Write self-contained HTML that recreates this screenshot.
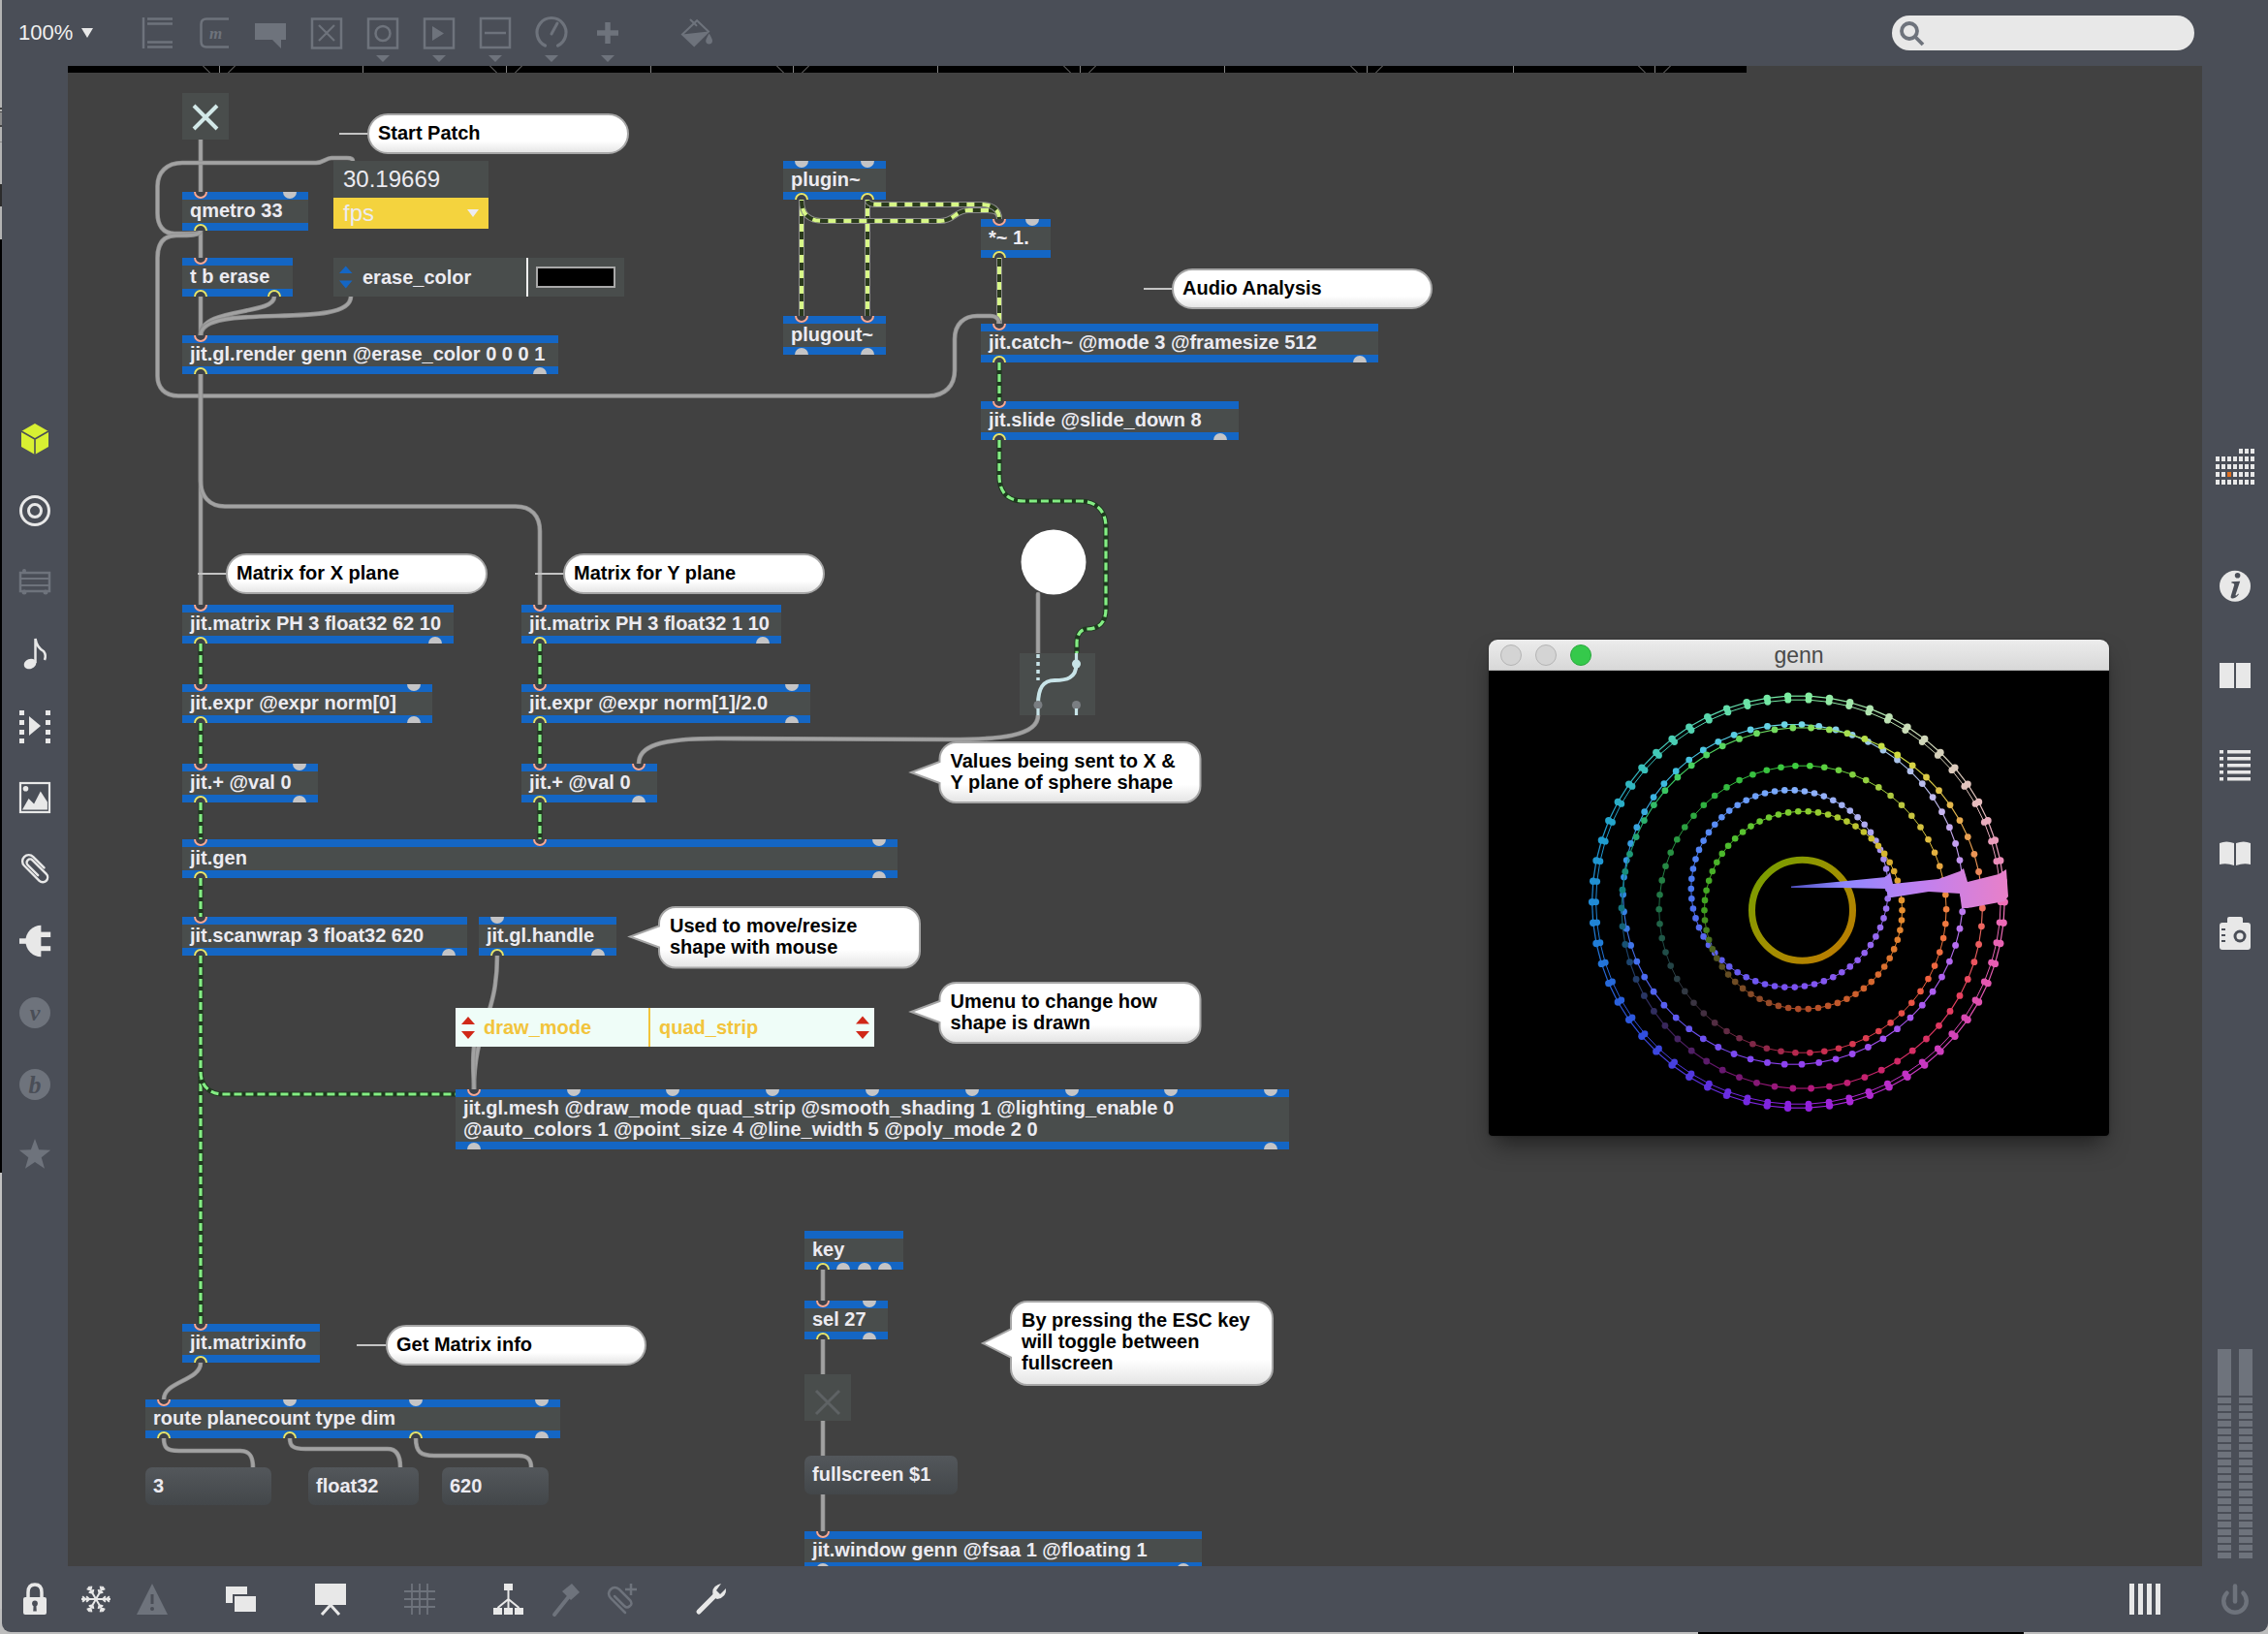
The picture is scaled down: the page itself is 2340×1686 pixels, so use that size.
<!DOCTYPE html><html><head><meta charset="utf-8"><style>
*{margin:0;padding:0;box-sizing:border-box}
html,body{width:2340px;height:1686px;overflow:hidden;background:#4a4e57;font-family:"Liberation Sans",sans-serif;position:relative}
.a{position:absolute}
.obj{position:absolute;background:#494d4c;border-top:8px solid #1466c4;border-bottom:8px solid #1466c4;color:#ecebf1;font-weight:bold;font-size:20px;line-height:22px;padding-left:8px;white-space:pre;overflow:hidden}
.msg{position:absolute;border-radius:7px;background:linear-gradient(#53575b,#43474a);color:#ecebf1;font-weight:bold;font-size:20px;line-height:22px;padding-left:8px;padding-top:8px;white-space:pre}
.cm{position:absolute;color:#000;font-weight:bold;font-size:20px;line-height:22px;white-space:pre}
svg{position:absolute;left:0;top:0;overflow:visible}
</style></head><body><div class="a" style="left:0;top:0;width:2px;height:250px;background:#b4b4b4"></div>
<div class="a" style="left:0;top:247px;width:2px;height:963px;background:#000"></div>
<div class="a" style="left:0;top:111px;width:2px;height:2px;background:#444"></div>
<div class="a" style="left:0;top:115px;width:2px;height:16px;background:#8c8c8c;border-top:1px solid #444;border-bottom:2px solid #444"></div>
<div class="a" style="left:0;top:146px;width:2px;height:1px;background:#888"></div>
<div class="a" style="left:0;top:190px;width:2px;height:23px;background:#2c2c2c"></div>
<div class="a" style="left:0;top:1210px;width:2px;height:476px;background:#c2c2c2"></div>
<div class="a" style="left:0;top:1660px;width:2340px;height:26px;background:#bdbdbd"></div>
<div class="a" style="left:1752px;top:1684px;width:336px;height:2px;background:#000"></div>
<div class="a" style="left:2px;top:1600px;width:2338px;height:84px;background:#4a4e57;border-radius:0 0 9px 9px"></div>
<div class="a" style="left:70px;top:68px;width:2202px;height:1548px;background:#414141"></div>
<div class="a" style="left:70px;top:68px;width:1732px;height:7px;background:#000"></div>
<div class="a" style="left:19px;top:19px;font-size:22px;color:#f0f0f0;line-height:30px">100%</div>
<svg width="2340" height="1686" viewBox="0 0 2340 1686"><path d="M84,29 L96,29 L90,39 Z" fill="#e8e8e8"/><g stroke="#6e737c" stroke-width="2.5" fill="none"><path d="M148,18 L148,50"/><path d="M152,19.5 L178,19.5 M152,24.5 L178,24.5 M152,43.5 L178,43.5 M152,48.5 L178,48.5"/></g><path d="M236,19.5 L213,19.5 Q207.5,19.5 207.5,25 L207.5,43 Q207.5,48.5 213,48.5 L236,48.5" stroke="#6e737c" stroke-width="2.5" fill="none"/><text x="216" y="40" font-family="Liberation Serif" font-style="italic" font-weight="bold" font-size="17" fill="#6e737c">m</text><path d="M263,24 L295,24 L295,41 L290,41 L290,50 L281,41 L263,41 Z" fill="#6e737c"/><rect x="322" y="19.5" width="30" height="30" stroke="#6e737c" stroke-width="2.5" fill="none"/><path d="M329,26 L345,42 M345,26 L329,42" stroke="#6e737c" stroke-width="2.2"/><rect x="380" y="19.5" width="30" height="30" stroke="#6e737c" stroke-width="2.5" fill="none"/><circle cx="395" cy="34.5" r="7.5" stroke="#6e737c" stroke-width="2.5" fill="none"/><path d="M388,57 L402,57 L395,64 Z" fill="#6e737c"/><rect x="438" y="19.5" width="30" height="30" stroke="#6e737c" stroke-width="2.5" fill="none"/><path d="M446,27 L458,34.5 L446,42 Z" fill="#6e737c"/><path d="M446,57 L460,57 L453,64 Z" fill="#6e737c"/><rect x="496" y="19" width="30" height="30" stroke="#6e737c" stroke-width="2.5" fill="none"/><path d="M500,34 L522,34" stroke="#6e737c" stroke-width="2.5"/><path d="M504,57 L518,57 L511,64 Z" fill="#6e737c"/><path d="M562.5,47 A15,15 0 1 1 575.5,47" stroke="#6e737c" stroke-width="3.2" fill="none" stroke-linecap="round"/><path d="M569,35 L575,24" stroke="#6e737c" stroke-width="3" stroke-linecap="round"/><path d="M562,57 L576,57 L569,64 Z" fill="#6e737c"/><path d="M616,34 L638,34 M627,23 L627,45" stroke="#6e737c" stroke-width="5.5"/><path d="M620,57 L634,57 L627,64 Z" fill="#6e737c"/><path d="M704,35.5 L719.1,21.2 L731,32.6 L716.2,47 Z" fill="none" stroke="#6e737c" stroke-width="2"/><path d="M704,35.5 L731,32.6 L716.2,47 Z" fill="#6e737c"/><path d="M712.5,20.5 L718.5,26.3" stroke="#6e737c" stroke-width="2" stroke-linecap="round"/><path d="M731.6,34.5 Q735,40 735,42 A3.4,3.4 0 1 1 728.2,42 Q728.4,40 731.6,34.5 Z" fill="#6e737c"/><path d="M209.5,68 L216.5,75 M226.5,68 L226.5,75 M242.5,68 L235.5,75" stroke="#a8a8a8" stroke-width="0.8"/><path d="M505.5,68 L512.5,75 M522.5,68 L522.5,75 M538.5,68 L531.5,75" stroke="#a8a8a8" stroke-width="0.8"/><path d="M801.5,68 L808.5,75 M818.5,68 L818.5,75 M834.5,68 L827.5,75" stroke="#a8a8a8" stroke-width="0.8"/><path d="M1097.5,68 L1104.5,75 M1114.5,68 L1114.5,75 M1130.5,68 L1123.5,75" stroke="#a8a8a8" stroke-width="0.8"/><path d="M1393.5,68 L1400.5,75 M1410.5,68 L1410.5,75 M1426.5,68 L1419.5,75" stroke="#a8a8a8" stroke-width="0.8"/><path d="M1690.5,68 L1697.5,75 M1707.5,68 L1707.5,75 M1723.5,68 L1716.5,75" stroke="#a8a8a8" stroke-width="0.8"/><path d="M374.5,68 L374.5,75" stroke="#a8a8a8" stroke-width="0.8"/><path d="M671.5,68 L671.5,75" stroke="#a8a8a8" stroke-width="0.8"/><path d="M967.5,68 L967.5,75" stroke="#a8a8a8" stroke-width="0.8"/><path d="M1263.5,68 L1263.5,75" stroke="#a8a8a8" stroke-width="0.8"/><path d="M1561.5,68 L1561.5,75" stroke="#a8a8a8" stroke-width="0.8"/><rect x="1952" y="16" width="312" height="36" rx="18" fill="#e8e8e8"/><circle cx="1970" cy="32" r="8" stroke="#6e737c" stroke-width="3.8" fill="none"/><path d="M1975.5,37.5 L1984,46" stroke="#6e737c" stroke-width="3.8"/><path d="M36,437 L50,445 L50,461 L36,469 L22,461 L22,445 Z" fill="#d8f032"/><path d="M22,445 L36,453 L50,445 M36,453 L36,469" stroke="#4a4e57" stroke-width="1.6" fill="none"/><circle cx="36" cy="527" r="14.5" stroke="#e8e8e8" stroke-width="3" fill="none"/><circle cx="36" cy="527" r="6.5" stroke="#e8e8e8" stroke-width="3" fill="none"/><rect x="21" y="591" width="30" height="19" stroke="#6e737c" stroke-width="2.5" fill="none"/><path d="M21,597 L51,597 M21,604 L51,604" stroke="#6e737c" stroke-width="2"/><circle cx="25" cy="611" r="2.5" fill="#6e737c"/><circle cx="47" cy="611" r="2.5" fill="#6e737c"/><circle cx="25" cy="589" r="2" fill="#6e737c"/><ellipse cx="31" cy="685" rx="6.5" ry="5" fill="#e8e8e8" transform="rotate(-20 31 685)"/><path d="M36.5,684 L36.5,659 Q38,668 45,672 Q48,676 46,681" stroke="#e8e8e8" stroke-width="2.5" fill="none"/><rect x="20" y="733" width="5" height="5" fill="#e8e8e8"/><rect x="47" y="733" width="5" height="5" fill="#e8e8e8"/><rect x="20" y="743" width="5" height="5" fill="#e8e8e8"/><rect x="47" y="743" width="5" height="5" fill="#e8e8e8"/><rect x="20" y="753" width="5" height="5" fill="#e8e8e8"/><rect x="47" y="753" width="5" height="5" fill="#e8e8e8"/><rect x="20" y="762" width="5" height="5" fill="#e8e8e8"/><rect x="47" y="762" width="5" height="5" fill="#e8e8e8"/><path d="M30,739 L42,749 L30,759 Z" fill="#e8e8e8"/><rect x="21" y="808" width="30" height="30" stroke="#e8e8e8" stroke-width="2.2" fill="none"/><circle cx="26.5" cy="813.8" r="2.8" fill="#e8e8e8"/><path d="M23,835.5 L29.6,824 L35.1,829.4 L41.8,816.5 L48.9,827.5 L48.9,835.5 Z" fill="#e8e8e8"/><g transform="translate(36,895) rotate(-45)"><path d="M6.5,7 L6.5,-9 A6.5,6.5 0 0 0 -6.5,-9 L-6.5,13 A5,5 0 0 0 3.5,13 L3.5,-7 A3.5,3.5 0 0 0 -3.5,-7 L-3.5,8" stroke="#e8e8e8" stroke-width="2.4" fill="none" stroke-linecap="round"/></g><path d="M42.4,954.8 A16,16.25 0 0 0 42.4,987.3 Z" fill="#e8e8e8"/><rect x="20" y="968.3" width="8" height="5.5" fill="#e8e8e8"/><rect x="42" y="961.6" width="10.2" height="5.4" fill="#e8e8e8"/><rect x="42" y="976.2" width="10.2" height="5" fill="#e8e8e8"/><circle cx="36" cy="1045" r="16" fill="#6e737c"/><text x="36" y="1053" text-anchor="middle" font-family="Liberation Serif" font-style="italic" font-weight="bold" font-size="24" fill="#4a4e57">v</text><circle cx="36" cy="1119" r="16" fill="#6e737c"/><text x="36" y="1128" text-anchor="middle" font-family="Liberation Serif" font-style="italic" font-weight="bold" font-size="26" fill="#4a4e57">b</text><path d="M36.0,1175.0 L40.1,1186.3 L52.2,1186.7 L42.7,1194.2 L46.0,1205.8 L36.0,1199.0 L26.0,1205.8 L29.3,1194.2 L19.8,1186.7 L31.9,1186.3 Z" fill="#6e737c"/><rect x="2310" y="463" width="4" height="5" fill="#e8e8e8"/><rect x="2316" y="463" width="4" height="5" fill="#e8e8e8"/><rect x="2322" y="463" width="4" height="5" fill="#e8e8e8"/><rect x="2286" y="471" width="4" height="5" fill="#e8e8e8"/><rect x="2292" y="471" width="4" height="5" fill="#e8e8e8"/><rect x="2298" y="471" width="4" height="5" fill="#e8e8e8"/><rect x="2304" y="471" width="4" height="5" fill="#e8e8e8"/><rect x="2310" y="471" width="4" height="5" fill="#e8e8e8"/><rect x="2316" y="471" width="4" height="5" fill="#e8e8e8"/><rect x="2322" y="471" width="4" height="5" fill="#e8e8e8"/><rect x="2286" y="479" width="4" height="5" fill="#e8e8e8"/><rect x="2292" y="479" width="4" height="5" fill="#e8e8e8"/><rect x="2298" y="479" width="4" height="5" fill="#e8e8e8"/><rect x="2304" y="479" width="4" height="5" fill="#e8e8e8"/><rect x="2310" y="479" width="4" height="5" fill="#e8e8e8"/><rect x="2316" y="479" width="4" height="5" fill="#e8e8e8"/><rect x="2322" y="479" width="4" height="5" fill="#e8e8e8"/><rect x="2286" y="487" width="4" height="5" fill="#e8e8e8"/><rect x="2292" y="487" width="4" height="5" fill="#e8e8e8"/><rect x="2298" y="487" width="4" height="5" fill="#e07020"/><rect x="2304" y="487" width="4" height="5" fill="#e8e8e8"/><rect x="2310" y="487" width="4" height="5" fill="#e8e8e8"/><rect x="2316" y="487" width="4" height="5" fill="#e8e8e8"/><rect x="2322" y="487" width="4" height="5" fill="#e8e8e8"/><rect x="2286" y="495" width="4" height="5" fill="#e8e8e8"/><rect x="2292" y="495" width="4" height="5" fill="#e8e8e8"/><rect x="2298" y="495" width="4" height="5" fill="#e8e8e8"/><rect x="2304" y="495" width="4" height="5" fill="#e8e8e8"/><rect x="2310" y="495" width="4" height="5" fill="#e8e8e8"/><rect x="2316" y="495" width="4" height="5" fill="#e8e8e8"/><rect x="2322" y="495" width="4" height="5" fill="#e8e8e8"/><circle cx="2306" cy="604.8" r="16" fill="#e8e8e8"/><circle cx="2308.6" cy="593.8" r="2.8" fill="#4a4e57"/><path d="M2302.5,600.2 L2311.2,599.8 L2306.6,613.5 Q2306.4,614.8 2307.6,614.2 L2309.5,612.6 L2309.9,613.3 Q2306.5,617.6 2303.2,617.6 Q2301,617.4 2301.8,614.8 L2305.2,603.6 Q2305.4,602 2302.3,601.6 Z" fill="#4a4e57"/><rect x="2290" y="684" width="15" height="26" fill="#e8e8e8"/><rect x="2307" y="684" width="15" height="26" fill="#e8e8e8"/><rect x="2290" y="774" width="4" height="3.5" fill="#e8e8e8"/><rect x="2298" y="774" width="24" height="3.5" fill="#e8e8e8"/><rect x="2290" y="781" width="4" height="3.5" fill="#e8e8e8"/><rect x="2298" y="781" width="24" height="3.5" fill="#e8e8e8"/><rect x="2290" y="788" width="4" height="3.5" fill="#e8e8e8"/><rect x="2298" y="788" width="24" height="3.5" fill="#e8e8e8"/><rect x="2290" y="795" width="4" height="3.5" fill="#e8e8e8"/><rect x="2298" y="795" width="24" height="3.5" fill="#e8e8e8"/><rect x="2290" y="802" width="4" height="3.5" fill="#e8e8e8"/><rect x="2298" y="802" width="24" height="3.5" fill="#e8e8e8"/><path d="M2290,870 Q2297,867 2305,870 L2305,893 Q2297,890 2290,892 Z M2307,870 Q2315,867 2322,870 L2322,892 Q2315,890 2307,893 Z" fill="#e8e8e8"/><rect x="2290" y="952" width="32" height="28" rx="3" fill="#e8e8e8"/><rect x="2298" y="946" width="16" height="8" rx="2" fill="#e8e8e8"/><circle cx="2311" cy="966" r="6.5" fill="#4a4e57"/><circle cx="2311" cy="966" r="3.5" fill="#e8e8e8"/><rect x="2292" y="958" width="4" height="2" fill="#4a4e57"/><rect x="2292" y="964" width="4" height="2" fill="#4a4e57"/><rect x="2292" y="970" width="4" height="2" fill="#4a4e57"/><rect x="2288" y="1392" width="14" height="48" fill="#6e737c"/><rect x="2288" y="1442" width="14" height="6" fill="#6e737c"/><rect x="2288" y="1450" width="14" height="6" fill="#6e737c"/><rect x="2288" y="1458" width="14" height="6" fill="#6e737c"/><rect x="2288" y="1466" width="14" height="6" fill="#6e737c"/><rect x="2288" y="1474" width="14" height="6" fill="#6e737c"/><rect x="2288" y="1482" width="14" height="6" fill="#6e737c"/><rect x="2288" y="1490" width="14" height="6" fill="#6e737c"/><rect x="2288" y="1498" width="14" height="6" fill="#6e737c"/><rect x="2288" y="1506" width="14" height="6" fill="#6e737c"/><rect x="2288" y="1514" width="14" height="6" fill="#6e737c"/><rect x="2288" y="1522" width="14" height="6" fill="#6e737c"/><rect x="2288" y="1530" width="14" height="6" fill="#6e737c"/><rect x="2288" y="1538" width="14" height="6" fill="#6e737c"/><rect x="2288" y="1546" width="14" height="6" fill="#6e737c"/><rect x="2288" y="1554" width="14" height="6" fill="#6e737c"/><rect x="2288" y="1562" width="14" height="6" fill="#6e737c"/><rect x="2288" y="1570" width="14" height="6" fill="#6e737c"/><rect x="2288" y="1578" width="14" height="6" fill="#6e737c"/><rect x="2288" y="1586" width="14" height="6" fill="#6e737c"/><rect x="2288" y="1594" width="14" height="6" fill="#6e737c"/><rect x="2288" y="1602" width="14" height="6" fill="#6e737c"/><rect x="2310" y="1392" width="14" height="48" fill="#6e737c"/><rect x="2310" y="1442" width="14" height="6" fill="#6e737c"/><rect x="2310" y="1450" width="14" height="6" fill="#6e737c"/><rect x="2310" y="1458" width="14" height="6" fill="#6e737c"/><rect x="2310" y="1466" width="14" height="6" fill="#6e737c"/><rect x="2310" y="1474" width="14" height="6" fill="#6e737c"/><rect x="2310" y="1482" width="14" height="6" fill="#6e737c"/><rect x="2310" y="1490" width="14" height="6" fill="#6e737c"/><rect x="2310" y="1498" width="14" height="6" fill="#6e737c"/><rect x="2310" y="1506" width="14" height="6" fill="#6e737c"/><rect x="2310" y="1514" width="14" height="6" fill="#6e737c"/><rect x="2310" y="1522" width="14" height="6" fill="#6e737c"/><rect x="2310" y="1530" width="14" height="6" fill="#6e737c"/><rect x="2310" y="1538" width="14" height="6" fill="#6e737c"/><rect x="2310" y="1546" width="14" height="6" fill="#6e737c"/><rect x="2310" y="1554" width="14" height="6" fill="#6e737c"/><rect x="2310" y="1562" width="14" height="6" fill="#6e737c"/><rect x="2310" y="1570" width="14" height="6" fill="#6e737c"/><rect x="2310" y="1578" width="14" height="6" fill="#6e737c"/><rect x="2310" y="1586" width="14" height="6" fill="#6e737c"/><rect x="2310" y="1594" width="14" height="6" fill="#6e737c"/><rect x="2310" y="1602" width="14" height="6" fill="#6e737c"/><path d="M29,1649 L29,1643 Q29,1635 36,1635 Q43,1635 43,1643 L43,1649" stroke="#e8e8e8" stroke-width="3.5" fill="none"/><rect x="24" y="1648" width="24" height="18" rx="2" fill="#e8e8e8"/><circle cx="36" cy="1654.5" r="2.9" fill="#4a4e57"/><path d="M34.6,1656 L37.4,1656 L37.8,1662.5 L34.2,1662.5 Z" fill="#4a4e57"/><path d="M99,1650 L114.0,1650.0 M106.0,1650.0 L108.9,1647.3 M106.0,1650.0 L108.9,1652.7 M110.0,1650.0 L112.9,1647.3 M110.0,1650.0 L112.9,1652.7 M99,1650 L106.5,1663.0 M102.5,1656.1 L106.3,1657.2 M102.5,1656.1 L101.6,1660.0 M104.5,1659.5 L108.3,1660.7 M104.5,1659.5 L103.6,1663.4 M99,1650 L91.5,1663.0 M95.5,1656.1 L96.4,1660.0 M95.5,1656.1 L91.7,1657.2 M93.5,1659.5 L94.4,1663.4 M93.5,1659.5 L89.7,1660.7 M99,1650 L84.0,1650.0 M92.0,1650.0 L89.1,1652.7 M92.0,1650.0 L89.1,1647.3 M88.0,1650.0 L85.1,1652.7 M88.0,1650.0 L85.1,1647.3 M99,1650 L91.5,1637.0 M95.5,1643.9 L91.7,1642.8 M95.5,1643.9 L96.4,1640.0 M93.5,1640.5 L89.7,1639.3 M93.5,1640.5 L94.4,1636.6 M99,1650 L106.5,1637.0 M102.5,1643.9 L101.6,1640.0 M102.5,1643.9 L106.3,1642.8 M104.5,1640.5 L103.6,1636.6 M104.5,1640.5 L108.3,1639.3" stroke="#e8e8e8" stroke-width="2" fill="none"/><path d="M157,1634 L173,1666 L141,1666 Z" fill="#6e737c"/><path d="M157,1645 L157,1655" stroke="#4a4e57" stroke-width="3"/><circle cx="157" cy="1660" r="2" fill="#4a4e57"/><rect x="233" y="1637" width="22" height="17" fill="#e8e8e8"/><rect x="241" y="1646" width="24" height="18" fill="#e8e8e8" stroke="#4a4e57" stroke-width="2"/><rect x="325" y="1634" width="32" height="22" fill="#e8e8e8"/><path d="M332,1666 L341,1656 L350,1666" stroke="#e8e8e8" stroke-width="3" fill="none"/><path d="M417,1642 L449,1642 M417,1650 L449,1650 M417,1658 L449,1658 M425,1634 L425,1666 M433,1634 L433,1666 M441,1634 L441,1666" stroke="#6e737c" stroke-width="1.8"/><rect x="520" y="1634" width="9" height="7" fill="#e8e8e8"/><rect x="509" y="1659" width="9" height="7" fill="#e8e8e8"/><rect x="520" y="1659" width="9" height="7" fill="#e8e8e8"/><rect x="531" y="1659" width="9" height="7" fill="#e8e8e8"/><path d="M524.5,1641 L524.5,1659 M524.5,1650 L513.5,1659 M524.5,1650 L535.5,1659" stroke="#e8e8e8" stroke-width="2" fill="none"/><path d="M572,1666 L588,1646" stroke="#6e737c" stroke-width="4" stroke-linecap="round"/><path d="M580,1642 L590,1634 L598,1643 L589,1651 Z" fill="#6e737c"/><path d="M645,1664 L630,1649 Q626,1644 630,1640 Q634,1636 639,1640 L650,1651 Q653,1655 650,1657 Q647,1660 644,1657 L634,1647" stroke="#6e737c" stroke-width="2.5" fill="none" stroke-linecap="round"/><path d="M651,1634 L651,1646 M645,1640 L657,1640" stroke="#6e737c" stroke-width="2.5"/><path d="M721,1663 L738,1646" stroke="#e8e8e8" stroke-width="5" stroke-linecap="round"/><path d="M736,1648 Q733,1638 741,1635 L744,1634 L739,1641 L743,1645 L749,1639 Q750,1648 740,1650 Z" fill="#e8e8e8"/><rect x="2197" y="1634" width="5" height="32" fill="#e8e8e8"/><rect x="2206" y="1634" width="5" height="32" fill="#e8e8e8"/><rect x="2215" y="1634" width="5" height="32" fill="#e8e8e8"/><rect x="2224" y="1634" width="5" height="32" fill="#e8e8e8"/><path d="M2297.6,1643.7 A11.8,11.8 0 1 0 2314.4,1643.7" stroke="#6e737c" stroke-width="4.4" fill="none" stroke-linecap="round"/><path d="M2306,1636.5 L2306,1652.5" stroke="#6e737c" stroke-width="4.5" stroke-linecap="round"/></svg>
<div class="a" style="left:0;top:0;width:2272px;height:1616px;overflow:hidden">
<svg width="2340" height="1686"><path d="M827,206 L827,326" stroke="#8a8a8a" stroke-width="6" fill="none" stroke-linecap="round"/><path d="M827,206 L827,326" stroke="#2a3a1c" stroke-width="4" fill="none"/><path d="M827,206 L827,326" stroke="#d8f888" stroke-width="4" stroke-dasharray="8 8" stroke-dashoffset="7" fill="none"/><path d="M895,206 L895,326" stroke="#8a8a8a" stroke-width="6" fill="none" stroke-linecap="round"/><path d="M895,206 L895,326" stroke="#2a3a1c" stroke-width="4" fill="none"/><path d="M895,206 L895,326" stroke="#d8f888" stroke-width="4" stroke-dasharray="8 8" stroke-dashoffset="7" fill="none"/><path d="M827,206 C827,222 835,228 850,228 L970,228 C985,228 985,217 1000,217 L1018,217 C1028,217 1031,220 1031,226" stroke="#8a8a8a" stroke-width="6" fill="none" stroke-linecap="round"/><path d="M827,206 C827,222 835,228 850,228 L970,228 C985,228 985,217 1000,217 L1018,217 C1028,217 1031,220 1031,226" stroke="#2a3a1c" stroke-width="4" fill="none"/><path d="M827,206 C827,222 835,228 850,228 L970,228 C985,228 985,217 1000,217 L1018,217 C1028,217 1031,220 1031,226" stroke="#d8f888" stroke-width="4" stroke-dasharray="8 8" stroke-dashoffset="7" fill="none"/><path d="M895,206 C895,210 898,211 905,211 L1012,211 C1024,211 1031,216 1031,226" stroke="#8a8a8a" stroke-width="6" fill="none" stroke-linecap="round"/><path d="M895,206 C895,210 898,211 905,211 L1012,211 C1024,211 1031,216 1031,226" stroke="#2a3a1c" stroke-width="4" fill="none"/><path d="M895,206 C895,210 898,211 905,211 L1012,211 C1024,211 1031,216 1031,226" stroke="#d8f888" stroke-width="4" stroke-dasharray="8 8" stroke-dashoffset="7" fill="none"/><path d="M1031,266 L1031,334" stroke="#8a8a8a" stroke-width="6" fill="none" stroke-linecap="round"/><path d="M1031,266 L1031,334" stroke="#2a3a1c" stroke-width="4" fill="none"/><path d="M1031,266 L1031,334" stroke="#d8f888" stroke-width="4" stroke-dasharray="8 8" stroke-dashoffset="7" fill="none"/><path d="M207,664 L207,706" stroke="#1f381f" stroke-width="5.2" fill="none" stroke-linecap="round"/><path d="M207,664 L207,706" stroke="#84ee84" stroke-width="3.2" stroke-dasharray="8 4" fill="none"/><path d="M207,746 L207,788" stroke="#1f381f" stroke-width="5.2" fill="none" stroke-linecap="round"/><path d="M207,746 L207,788" stroke="#84ee84" stroke-width="3.2" stroke-dasharray="8 4" fill="none"/><path d="M207,828 L207,866" stroke="#1f381f" stroke-width="5.2" fill="none" stroke-linecap="round"/><path d="M207,828 L207,866" stroke="#84ee84" stroke-width="3.2" stroke-dasharray="8 4" fill="none"/><path d="M557,664 L557,706" stroke="#1f381f" stroke-width="5.2" fill="none" stroke-linecap="round"/><path d="M557,664 L557,706" stroke="#84ee84" stroke-width="3.2" stroke-dasharray="8 4" fill="none"/><path d="M557,746 L557,788" stroke="#1f381f" stroke-width="5.2" fill="none" stroke-linecap="round"/><path d="M557,746 L557,788" stroke="#84ee84" stroke-width="3.2" stroke-dasharray="8 4" fill="none"/><path d="M557,828 L557,866" stroke="#1f381f" stroke-width="5.2" fill="none" stroke-linecap="round"/><path d="M557,828 L557,866" stroke="#84ee84" stroke-width="3.2" stroke-dasharray="8 4" fill="none"/><path d="M207,906 L207,946" stroke="#1f381f" stroke-width="5.2" fill="none" stroke-linecap="round"/><path d="M207,906 L207,946" stroke="#84ee84" stroke-width="3.2" stroke-dasharray="8 4" fill="none"/><path d="M207,986 L207,1366" stroke="#1f381f" stroke-width="5.2" fill="none" stroke-linecap="round"/><path d="M207,986 L207,1366" stroke="#84ee84" stroke-width="3.2" stroke-dasharray="8 4" fill="none"/><path d="M207,1106 C207,1120 216,1129 230,1129 L470,1129" stroke="#1f381f" stroke-width="5.2" fill="none" stroke-linecap="round"/><path d="M207,1106 C207,1120 216,1129 230,1129 L470,1129" stroke="#84ee84" stroke-width="3.2" stroke-dasharray="8 4" fill="none"/><path d="M1031,374 L1031,414" stroke="#1f381f" stroke-width="5.2" fill="none" stroke-linecap="round"/><path d="M1031,374 L1031,414" stroke="#84ee84" stroke-width="3.2" stroke-dasharray="8 4" fill="none"/><path d="M1031,454 L1031,491 C1031,508 1040,517 1056,517 L1114,517 C1132,517 1141,528 1141,544 L1141,628 C1141,642 1134,649 1122,649 C1114,649 1111,656 1111,664 L1111,674" stroke="#1f381f" stroke-width="5.2" fill="none" stroke-linecap="round"/><path d="M1031,454 L1031,491 C1031,508 1040,517 1056,517 L1114,517 C1132,517 1141,528 1141,544 L1141,628 C1141,642 1134,649 1122,649 C1114,649 1111,656 1111,664 L1111,674" stroke="#84ee84" stroke-width="3.2" stroke-dasharray="8 4" fill="none"/><path d="M207,144 L207,198" stroke="#8e8e8e" stroke-width="4.6" fill="none" stroke-linecap="round"/><path d="M207,144 L207,198" stroke="#a2a2a2" stroke-width="3" fill="none" stroke-linecap="round"/><path d="M207,238 L207,266" stroke="#8e8e8e" stroke-width="4.6" fill="none" stroke-linecap="round"/><path d="M207,238 L207,266" stroke="#a2a2a2" stroke-width="3" fill="none" stroke-linecap="round"/><path d="M207,238 C207,241 198,241 180,241 C168,241 162.5,232 162.5,220 L162.5,192 C162.5,178 172,168 188,168 L326,168 C334,168 336,163 342,163 L358,163 C362,163 364,164 364,166" stroke="#8e8e8e" stroke-width="4.6" fill="none" stroke-linecap="round"/><path d="M207,238 C207,241 198,241 180,241 C168,241 162.5,232 162.5,220 L162.5,192 C162.5,178 172,168 188,168 L326,168 C334,168 336,163 342,163 L358,163 C362,163 364,164 364,166" stroke="#a2a2a2" stroke-width="3" fill="none" stroke-linecap="round"/><path d="M207,238 C207,243 195,243 182,243 C168,243 162.5,252 162.5,266 L162.5,388 C162.5,400 170,408.5 184,408.5 L958,408.5 C975,408.5 985,398 985,382 L985,350 C985,334 995,326 1008,326 L1022,326 C1028,326 1031,330 1031,334" stroke="#8e8e8e" stroke-width="4.6" fill="none" stroke-linecap="round"/><path d="M207,238 C207,243 195,243 182,243 C168,243 162.5,252 162.5,266 L162.5,388 C162.5,400 170,408.5 184,408.5 L958,408.5 C975,408.5 985,398 985,382 L985,350 C985,334 995,326 1008,326 L1022,326 C1028,326 1031,330 1031,334" stroke="#a2a2a2" stroke-width="3" fill="none" stroke-linecap="round"/><path d="M207,306 L207,346" stroke="#8e8e8e" stroke-width="4.6" fill="none" stroke-linecap="round"/><path d="M207,306 L207,346" stroke="#a2a2a2" stroke-width="3" fill="none" stroke-linecap="round"/><path d="M283,306 C283,326 207,316 207,346" stroke="#8e8e8e" stroke-width="4.6" fill="none" stroke-linecap="round"/><path d="M283,306 C283,326 207,316 207,346" stroke="#a2a2a2" stroke-width="3" fill="none" stroke-linecap="round"/><path d="M362,306 C362,342 207,310 207,346" stroke="#8e8e8e" stroke-width="4.6" fill="none" stroke-linecap="round"/><path d="M362,306 C362,342 207,310 207,346" stroke="#a2a2a2" stroke-width="3" fill="none" stroke-linecap="round"/><path d="M207,386 L207,624" stroke="#8e8e8e" stroke-width="4.6" fill="none" stroke-linecap="round"/><path d="M207,386 L207,624" stroke="#a2a2a2" stroke-width="3" fill="none" stroke-linecap="round"/><path d="M207,386 L207,496 C207,512 216,522.5 232,522.5 L532,522.5 C548,522.5 557,532 557,548 L557,624" stroke="#8e8e8e" stroke-width="4.6" fill="none" stroke-linecap="round"/><path d="M207,386 L207,496 C207,512 216,522.5 232,522.5 L532,522.5 C548,522.5 557,532 557,548 L557,624" stroke="#a2a2a2" stroke-width="3" fill="none" stroke-linecap="round"/><path d="M513,986 C513,1050 489,1060 489,1124" stroke="#8e8e8e" stroke-width="4.6" fill="none" stroke-linecap="round"/><path d="M513,986 C513,1050 489,1060 489,1124" stroke="#a2a2a2" stroke-width="3" fill="none" stroke-linecap="round"/><path d="M489,1080 C487,1100 489,1110 489,1124" stroke="#8e8e8e" stroke-width="4.6" fill="none" stroke-linecap="round"/><path d="M489,1080 C487,1100 489,1110 489,1124" stroke="#a2a2a2" stroke-width="3" fill="none" stroke-linecap="round"/><path d="M1071,613 L1071,674" stroke="#8e8e8e" stroke-width="4.6" fill="none" stroke-linecap="round"/><path d="M1071,613 L1071,674" stroke="#a2a2a2" stroke-width="3" fill="none" stroke-linecap="round"/><path d="M1071,738 C1071,760 1030,763 980,763 L740,762 C680,762 659,770 659,788" stroke="#8e8e8e" stroke-width="4.6" fill="none" stroke-linecap="round"/><path d="M1071,738 C1071,760 1030,763 980,763 L740,762 C680,762 659,770 659,788" stroke="#a2a2a2" stroke-width="3" fill="none" stroke-linecap="round"/><path d="M207,1406 C207,1425 169,1425 169,1444" stroke="#8e8e8e" stroke-width="4.6" fill="none" stroke-linecap="round"/><path d="M207,1406 C207,1425 169,1425 169,1444" stroke="#a2a2a2" stroke-width="3" fill="none" stroke-linecap="round"/><path d="M169,1484 C169,1494 172,1497 185,1497 L248,1497 C258,1497 261,1503 261,1514" stroke="#8e8e8e" stroke-width="4.6" fill="none" stroke-linecap="round"/><path d="M169,1484 C169,1494 172,1497 185,1497 L248,1497 C258,1497 261,1503 261,1514" stroke="#a2a2a2" stroke-width="3" fill="none" stroke-linecap="round"/><path d="M299,1484 C299,1492 302,1495 315,1495 L400,1495 C410,1495 413,1503 413,1514" stroke="#8e8e8e" stroke-width="4.6" fill="none" stroke-linecap="round"/><path d="M299,1484 C299,1492 302,1495 315,1495 L400,1495 C410,1495 413,1503 413,1514" stroke="#a2a2a2" stroke-width="3" fill="none" stroke-linecap="round"/><path d="M429,1484 C429,1498 434,1502 448,1502 L535,1502 C545,1502 548,1506 548,1514" stroke="#8e8e8e" stroke-width="4.6" fill="none" stroke-linecap="round"/><path d="M429,1484 C429,1498 434,1502 448,1502 L535,1502 C545,1502 548,1506 548,1514" stroke="#a2a2a2" stroke-width="3" fill="none" stroke-linecap="round"/><path d="M849,1310 L849,1342" stroke="#8e8e8e" stroke-width="4.6" fill="none" stroke-linecap="round"/><path d="M849,1310 L849,1342" stroke="#a2a2a2" stroke-width="3" fill="none" stroke-linecap="round"/><path d="M849,1382 L849,1418" stroke="#8e8e8e" stroke-width="4.6" fill="none" stroke-linecap="round"/><path d="M849,1382 L849,1418" stroke="#a2a2a2" stroke-width="3" fill="none" stroke-linecap="round"/><path d="M849,1466 L849,1502" stroke="#8e8e8e" stroke-width="4.6" fill="none" stroke-linecap="round"/><path d="M849,1466 L849,1502" stroke="#a2a2a2" stroke-width="3" fill="none" stroke-linecap="round"/><path d="M849,1542 L849,1580" stroke="#8e8e8e" stroke-width="4.6" fill="none" stroke-linecap="round"/><path d="M849,1542 L849,1580" stroke="#a2a2a2" stroke-width="3" fill="none" stroke-linecap="round"/></svg>
<div class="a" style="left:188px;top:96px;width:48px;height:48px;background:#494d4c"></div>
<div class="obj" style="left:188px;top:198px;width:130px;height:40px">qmetro 33</div>
<div class="obj" style="left:188px;top:266px;width:114px;height:40px">t b erase</div>
<div class="obj" style="left:188px;top:346px;width:388px;height:40px">jit.gl.render genn @erase_color 0 0 0 1</div>
<div class="a" style="left:344px;top:166px;width:160px;height:38px;background:#494d4c;color:#ecebf1;font-size:24px;line-height:30px;padding-left:10px;padding-top:4px">30.19669</div>
<div class="a" style="left:344px;top:204px;width:160px;height:32px;background:#f4d33e;color:#ecebf1;font-size:24px;line-height:28px;padding-left:10px;padding-top:2px">fps</div>
<div class="a" style="left:344px;top:266px;width:300px;height:40px;background:#494d4c;color:#ecebf1;font-weight:bold;font-size:20px;line-height:22px;padding-left:30px;padding-top:9px">erase_color</div>
<div class="a" style="left:542.5px;top:266px;width:2px;height:40px;background:#f0f0f0"></div>
<div class="a" style="left:553px;top:275px;width:82px;height:22px;background:#000;border:2px solid #a8a8a8"></div>
<div class="obj" style="left:808px;top:166px;width:106px;height:40px">plugin~</div>
<div class="obj" style="left:808px;top:326px;width:106px;height:40px">plugout~</div>
<div class="obj" style="left:1012px;top:226px;width:72px;height:40px">*~ 1.</div>
<div class="obj" style="left:1012px;top:334px;width:410px;height:40px">jit.catch~ @mode 3 @framesize 512</div>
<div class="obj" style="left:1012px;top:414px;width:266px;height:40px">jit.slide @slide_down 8</div>
<div class="obj" style="left:188px;top:624px;width:280px;height:40px">jit.matrix PH 3 float32 62 10</div>
<div class="obj" style="left:188px;top:706px;width:258px;height:40px">jit.expr @expr norm[0]</div>
<div class="obj" style="left:188px;top:788px;width:140px;height:40px">jit.+ @val 0</div>
<div class="obj" style="left:538px;top:624px;width:268px;height:40px">jit.matrix PH 3 float32 1 10</div>
<div class="obj" style="left:538px;top:706px;width:298px;height:40px">jit.expr @expr norm[1]/2.0</div>
<div class="obj" style="left:538px;top:788px;width:140px;height:40px">jit.+ @val 0</div>
<div class="obj" style="left:188px;top:866px;width:738px;height:40px">jit.gen</div>
<div class="obj" style="left:188px;top:946px;width:294px;height:40px">jit.scanwrap 3 float32 620</div>
<div class="obj" style="left:494px;top:946px;width:142px;height:40px">jit.gl.handle</div>
<div class="a" style="left:470px;top:1040px;width:432px;height:40px;background:#effdf8"></div>
<div class="a" style="left:668.5px;top:1040px;width:2px;height:40px;background:#f2c43c"></div>
<div class="a" style="left:499px;top:1049px;color:#f2c43c;font-weight:bold;font-size:20px;line-height:22px">draw_mode</div>
<div class="a" style="left:680px;top:1049px;color:#f2c43c;font-weight:bold;font-size:20px;line-height:22px">quad_strip</div>
<div class="obj" style="left:470px;top:1124px;width:860px;height:62px">jit.gl.mesh @draw_mode quad_strip @smooth_shading 1 @lighting_enable 0
@auto_colors 1 @point_size 4 @line_width 5 @poly_mode 2 0</div>
<div class="obj" style="left:188px;top:1366px;width:142px;height:40px">jit.matrixinfo</div>
<div class="obj" style="left:150px;top:1444px;width:428px;height:40px">route planecount type dim</div>
<div class="msg" style="left:150px;top:1514px;width:130px;height:39px">3</div>
<div class="msg" style="left:318px;top:1514px;width:114px;height:39px">float32</div>
<div class="msg" style="left:456px;top:1514px;width:110px;height:39px">620</div>
<div class="obj" style="left:830px;top:1270px;width:102px;height:40px">key</div>
<div class="obj" style="left:830px;top:1342px;width:86px;height:40px">sel 27</div>
<div class="a" style="left:830px;top:1418px;width:48px;height:48px;background:#494d4c"></div>
<div class="msg" style="left:830px;top:1502px;width:158px;height:40px">fullscreen $1</div>
<div class="obj" style="left:830px;top:1580px;width:410px;height:40px">jit.window genn @fsaa 1 @floating 1</div>
<div class="a" style="left:1052px;top:674px;width:78px;height:64px;background:#494d4c"></div>
<svg width="2340" height="1686"><path d="M200,198 A7,7 0 0 0 214,198 Z" fill="#3d4148"/><path d="M201,198 A6,6 0 0 0 213,198" stroke="#f6a896" stroke-width="2" fill="none"/><path d="M292,198 A7,7 0 0 0 306,198 Z" fill="#c4c4c6"/><path d="M200,238 A7,7 0 0 1 214,238 Z" fill="#3d4148"/><path d="M201,238 A6,6 0 0 1 213,238" stroke="#e4e46e" stroke-width="2" fill="none"/><path d="M200,266 A7,7 0 0 0 214,266 Z" fill="#3d4148"/><path d="M201,266 A6,6 0 0 0 213,266" stroke="#f6a896" stroke-width="2" fill="none"/><path d="M200,306 A7,7 0 0 1 214,306 Z" fill="#3d4148"/><path d="M201,306 A6,6 0 0 1 213,306" stroke="#e4e46e" stroke-width="2" fill="none"/><path d="M276,306 A7,7 0 0 1 290,306 Z" fill="#3d4148"/><path d="M277,306 A6,6 0 0 1 289,306" stroke="#e4e46e" stroke-width="2" fill="none"/><path d="M200,346 A7,7 0 0 0 214,346 Z" fill="#3d4148"/><path d="M201,346 A6,6 0 0 0 213,346" stroke="#f6a896" stroke-width="2" fill="none"/><path d="M200,386 A7,7 0 0 1 214,386 Z" fill="#3d4148"/><path d="M201,386 A6,6 0 0 1 213,386" stroke="#e4e46e" stroke-width="2" fill="none"/><path d="M550,386 A7,7 0 0 1 564,386 Z" fill="#c4c4c6"/><path d="M820,166 A7,7 0 0 0 834,166 Z" fill="#c4c4c6"/><path d="M888,166 A7,7 0 0 0 902,166 Z" fill="#c4c4c6"/><path d="M820,206 A7,7 0 0 1 834,206 Z" fill="#3d4148"/><path d="M821,206 A6,6 0 0 1 833,206" stroke="#e4e46e" stroke-width="2" fill="none"/><path d="M888,206 A7,7 0 0 1 902,206 Z" fill="#3d4148"/><path d="M889,206 A6,6 0 0 1 901,206" stroke="#e4e46e" stroke-width="2" fill="none"/><path d="M820,326 A7,7 0 0 0 834,326 Z" fill="#3d4148"/><path d="M821,326 A6,6 0 0 0 833,326" stroke="#f6a896" stroke-width="2" fill="none"/><path d="M888,326 A7,7 0 0 0 902,326 Z" fill="#3d4148"/><path d="M889,326 A6,6 0 0 0 901,326" stroke="#f6a896" stroke-width="2" fill="none"/><path d="M820,366 A7,7 0 0 1 834,366 Z" fill="#c4c4c6"/><path d="M888,366 A7,7 0 0 1 902,366 Z" fill="#c4c4c6"/><path d="M1024,226 A7,7 0 0 0 1038,226 Z" fill="#3d4148"/><path d="M1025,226 A6,6 0 0 0 1037,226" stroke="#f6a896" stroke-width="2" fill="none"/><path d="M1058,226 A7,7 0 0 0 1072,226 Z" fill="#c4c4c6"/><path d="M1024,266 A7,7 0 0 1 1038,266 Z" fill="#3d4148"/><path d="M1025,266 A6,6 0 0 1 1037,266" stroke="#e4e46e" stroke-width="2" fill="none"/><path d="M1024,334 A7,7 0 0 0 1038,334 Z" fill="#3d4148"/><path d="M1025,334 A6,6 0 0 0 1037,334" stroke="#f6a896" stroke-width="2" fill="none"/><path d="M1024,374 A7,7 0 0 1 1038,374 Z" fill="#3d4148"/><path d="M1025,374 A6,6 0 0 1 1037,374" stroke="#e4e46e" stroke-width="2" fill="none"/><path d="M1396,374 A7,7 0 0 1 1410,374 Z" fill="#c4c4c6"/><path d="M1024,414 A7,7 0 0 0 1038,414 Z" fill="#3d4148"/><path d="M1025,414 A6,6 0 0 0 1037,414" stroke="#f6a896" stroke-width="2" fill="none"/><path d="M1024,454 A7,7 0 0 1 1038,454 Z" fill="#3d4148"/><path d="M1025,454 A6,6 0 0 1 1037,454" stroke="#e4e46e" stroke-width="2" fill="none"/><path d="M1252,454 A7,7 0 0 1 1266,454 Z" fill="#c4c4c6"/><path d="M200,624 A7,7 0 0 0 214,624 Z" fill="#3d4148"/><path d="M201,624 A6,6 0 0 0 213,624" stroke="#f6a896" stroke-width="2" fill="none"/><path d="M200,664 A7,7 0 0 1 214,664 Z" fill="#3d4148"/><path d="M201,664 A6,6 0 0 1 213,664" stroke="#e4e46e" stroke-width="2" fill="none"/><path d="M442,664 A7,7 0 0 1 456,664 Z" fill="#c4c4c6"/><path d="M200,706 A7,7 0 0 0 214,706 Z" fill="#3d4148"/><path d="M201,706 A6,6 0 0 0 213,706" stroke="#f6a896" stroke-width="2" fill="none"/><path d="M420,706 A7,7 0 0 0 434,706 Z" fill="#c4c4c6"/><path d="M200,746 A7,7 0 0 1 214,746 Z" fill="#3d4148"/><path d="M201,746 A6,6 0 0 1 213,746" stroke="#e4e46e" stroke-width="2" fill="none"/><path d="M420,746 A7,7 0 0 1 434,746 Z" fill="#c4c4c6"/><path d="M200,788 A7,7 0 0 0 214,788 Z" fill="#3d4148"/><path d="M201,788 A6,6 0 0 0 213,788" stroke="#f6a896" stroke-width="2" fill="none"/><path d="M302,788 A7,7 0 0 0 316,788 Z" fill="#c4c4c6"/><path d="M200,828 A7,7 0 0 1 214,828 Z" fill="#3d4148"/><path d="M201,828 A6,6 0 0 1 213,828" stroke="#e4e46e" stroke-width="2" fill="none"/><path d="M302,828 A7,7 0 0 1 316,828 Z" fill="#c4c4c6"/><path d="M550,624 A7,7 0 0 0 564,624 Z" fill="#3d4148"/><path d="M551,624 A6,6 0 0 0 563,624" stroke="#f6a896" stroke-width="2" fill="none"/><path d="M550,664 A7,7 0 0 1 564,664 Z" fill="#3d4148"/><path d="M551,664 A6,6 0 0 1 563,664" stroke="#e4e46e" stroke-width="2" fill="none"/><path d="M780,664 A7,7 0 0 1 794,664 Z" fill="#c4c4c6"/><path d="M550,706 A7,7 0 0 0 564,706 Z" fill="#3d4148"/><path d="M551,706 A6,6 0 0 0 563,706" stroke="#f6a896" stroke-width="2" fill="none"/><path d="M810,706 A7,7 0 0 0 824,706 Z" fill="#c4c4c6"/><path d="M550,746 A7,7 0 0 1 564,746 Z" fill="#3d4148"/><path d="M551,746 A6,6 0 0 1 563,746" stroke="#e4e46e" stroke-width="2" fill="none"/><path d="M810,746 A7,7 0 0 1 824,746 Z" fill="#c4c4c6"/><path d="M550,788 A7,7 0 0 0 564,788 Z" fill="#3d4148"/><path d="M551,788 A6,6 0 0 0 563,788" stroke="#f6a896" stroke-width="2" fill="none"/><path d="M652,788 A7,7 0 0 0 666,788 Z" fill="#3d4148"/><path d="M653,788 A6,6 0 0 0 665,788" stroke="#f6a896" stroke-width="2" fill="none"/><path d="M550,828 A7,7 0 0 1 564,828 Z" fill="#3d4148"/><path d="M551,828 A6,6 0 0 1 563,828" stroke="#e4e46e" stroke-width="2" fill="none"/><path d="M652,828 A7,7 0 0 1 666,828 Z" fill="#c4c4c6"/><path d="M200,866 A7,7 0 0 0 214,866 Z" fill="#3d4148"/><path d="M201,866 A6,6 0 0 0 213,866" stroke="#f6a896" stroke-width="2" fill="none"/><path d="M550,866 A7,7 0 0 0 564,866 Z" fill="#3d4148"/><path d="M551,866 A6,6 0 0 0 563,866" stroke="#f6a896" stroke-width="2" fill="none"/><path d="M900,866 A7,7 0 0 0 914,866 Z" fill="#c4c4c6"/><path d="M200,906 A7,7 0 0 1 214,906 Z" fill="#3d4148"/><path d="M201,906 A6,6 0 0 1 213,906" stroke="#e4e46e" stroke-width="2" fill="none"/><path d="M900,906 A7,7 0 0 1 914,906 Z" fill="#c4c4c6"/><path d="M200,946 A7,7 0 0 0 214,946 Z" fill="#3d4148"/><path d="M201,946 A6,6 0 0 0 213,946" stroke="#f6a896" stroke-width="2" fill="none"/><path d="M200,986 A7,7 0 0 1 214,986 Z" fill="#3d4148"/><path d="M201,986 A6,6 0 0 1 213,986" stroke="#e4e46e" stroke-width="2" fill="none"/><path d="M456,986 A7,7 0 0 1 470,986 Z" fill="#c4c4c6"/><path d="M506,946 A7,7 0 0 0 520,946 Z" fill="#c4c4c6"/><path d="M506,986 A7,7 0 0 1 520,986 Z" fill="#3d4148"/><path d="M507,986 A6,6 0 0 1 519,986" stroke="#e4e46e" stroke-width="2" fill="none"/><path d="M610,986 A7,7 0 0 1 624,986 Z" fill="#c4c4c6"/><path d="M482,1124 A7,7 0 0 0 496,1124 Z" fill="#3d4148"/><path d="M483,1124 A6,6 0 0 0 495,1124" stroke="#f6a896" stroke-width="2" fill="none"/><path d="M585,1124 A7,7 0 0 0 599,1124 Z" fill="#c4c4c6"/><path d="M687,1124 A7,7 0 0 0 701,1124 Z" fill="#c4c4c6"/><path d="M790,1124 A7,7 0 0 0 804,1124 Z" fill="#c4c4c6"/><path d="M893,1124 A7,7 0 0 0 907,1124 Z" fill="#c4c4c6"/><path d="M996,1124 A7,7 0 0 0 1010,1124 Z" fill="#c4c4c6"/><path d="M1099,1124 A7,7 0 0 0 1113,1124 Z" fill="#c4c4c6"/><path d="M1201,1124 A7,7 0 0 0 1215,1124 Z" fill="#c4c4c6"/><path d="M1304,1124 A7,7 0 0 0 1318,1124 Z" fill="#c4c4c6"/><path d="M482,1186 A7,7 0 0 1 496,1186 Z" fill="#c4c4c6"/><path d="M1304,1186 A7,7 0 0 1 1318,1186 Z" fill="#c4c4c6"/><path d="M200,1366 A7,7 0 0 0 214,1366 Z" fill="#3d4148"/><path d="M201,1366 A6,6 0 0 0 213,1366" stroke="#f6a896" stroke-width="2" fill="none"/><path d="M200,1406 A7,7 0 0 1 214,1406 Z" fill="#3d4148"/><path d="M201,1406 A6,6 0 0 1 213,1406" stroke="#e4e46e" stroke-width="2" fill="none"/><path d="M162,1444 A7,7 0 0 0 176,1444 Z" fill="#3d4148"/><path d="M163,1444 A6,6 0 0 0 175,1444" stroke="#f6a896" stroke-width="2" fill="none"/><path d="M292,1444 A7,7 0 0 0 306,1444 Z" fill="#c4c4c6"/><path d="M422,1444 A7,7 0 0 0 436,1444 Z" fill="#c4c4c6"/><path d="M552,1444 A7,7 0 0 0 566,1444 Z" fill="#c4c4c6"/><path d="M162,1484 A7,7 0 0 1 176,1484 Z" fill="#3d4148"/><path d="M163,1484 A6,6 0 0 1 175,1484" stroke="#e4e46e" stroke-width="2" fill="none"/><path d="M292,1484 A7,7 0 0 1 306,1484 Z" fill="#3d4148"/><path d="M293,1484 A6,6 0 0 1 305,1484" stroke="#e4e46e" stroke-width="2" fill="none"/><path d="M422,1484 A7,7 0 0 1 436,1484 Z" fill="#3d4148"/><path d="M423,1484 A6,6 0 0 1 435,1484" stroke="#e4e46e" stroke-width="2" fill="none"/><path d="M552,1484 A7,7 0 0 1 566,1484 Z" fill="#c4c4c6"/><path d="M842,1310 A7,7 0 0 1 856,1310 Z" fill="#3d4148"/><path d="M843,1310 A6,6 0 0 1 855,1310" stroke="#e4e46e" stroke-width="2" fill="none"/><path d="M863,1310 A7,7 0 0 1 877,1310 Z" fill="#c4c4c6"/><path d="M885,1310 A7,7 0 0 1 899,1310 Z" fill="#c4c4c6"/><path d="M906,1310 A7,7 0 0 1 920,1310 Z" fill="#c4c4c6"/><path d="M842,1342 A7,7 0 0 0 856,1342 Z" fill="#3d4148"/><path d="M843,1342 A6,6 0 0 0 855,1342" stroke="#f6a896" stroke-width="2" fill="none"/><path d="M890,1342 A7,7 0 0 0 904,1342 Z" fill="#c4c4c6"/><path d="M842,1382 A7,7 0 0 1 856,1382 Z" fill="#3d4148"/><path d="M843,1382 A6,6 0 0 1 855,1382" stroke="#e4e46e" stroke-width="2" fill="none"/><path d="M890,1382 A7,7 0 0 1 904,1382 Z" fill="#c4c4c6"/><path d="M842,1580 A7,7 0 0 0 856,1580 Z" fill="#3d4148"/><path d="M843,1580 A6,6 0 0 0 855,1580" stroke="#f6a896" stroke-width="2" fill="none"/><path d="M842,1620 A7,7 0 0 1 856,1620 Z" fill="#c4c4c6"/><path d="M1214,1620 A7,7 0 0 1 1228,1620 Z" fill="#c4c4c6"/><path d="M200,109 L224,133 M224,109 L200,133" stroke="#d2e8e8" stroke-width="4"/><path d="M842,1435 L866,1459 M866,1435 L842,1459" stroke="#5e6264" stroke-width="3"/><path d="M482,216 L494,216 L488,224 Z" fill="#ecebf1"/><path d="M350,282 L363.5,282 L356.75,274.5 Z M350,289.5 L363.5,289.5 L356.75,297.5 Z" fill="#1466c4"/><path d="M476,1057 L490,1057 L483,1049 Z M476,1064 L490,1064 L483,1072 Z" fill="#d02818"/><path d="M883,1056.5 L897,1056.5 L890,1048.5 Z M883,1064 L897,1064 L890,1072 Z" fill="#d02818"/><circle cx="1087" cy="580" r="33.5" fill="#ffffff"/><path d="M1071,675 L1071,702" stroke="#c8e4e8" stroke-width="3.5" stroke-dasharray="4 4"/><path d="M1110.5,685 C1110.5,700 1100,702 1088,702 C1076,702 1071,710 1071,727" stroke="#c8e4e8" stroke-width="4" fill="none"/><path d="M1110.5,674 L1110.5,684" stroke="#c8e4e8" stroke-width="3.2"/><circle cx="1110.5" cy="685" r="4.5" fill="#c8e4e8"/><circle cx="1071" cy="727.5" r="4.5" fill="#7a7e82"/><circle cx="1110.5" cy="727.5" r="4.5" fill="#7a7e82"/><path d="M1071,731 L1071,738 M1110.5,731 L1110.5,738" stroke="#c8e4e8" stroke-width="3.2"/></svg>
<div class="a" style="left:350px;top:137px;width:31px;height:2px;background:#c4c4c4"></div>
<div class="cm" style="left:379px;top:117px;width:270px;height:42px;border-radius:21.0px;border:2px solid #a6a6a6;background:linear-gradient(#ffffff 70%,#e6e6e6);padding-left:9px;padding-top:7px">Start Patch</div>
<div class="a" style="left:1180px;top:297px;width:31px;height:2px;background:#c4c4c4"></div>
<div class="cm" style="left:1209px;top:277px;width:269px;height:42px;border-radius:21.0px;border:2px solid #a6a6a6;background:linear-gradient(#ffffff 70%,#e6e6e6);padding-left:9px;padding-top:7px">Audio Analysis</div>
<div class="a" style="left:204px;top:591px;width:31px;height:2px;background:#c4c4c4"></div>
<div class="cm" style="left:233px;top:571px;width:270px;height:42px;border-radius:21.0px;border:2px solid #a6a6a6;background:linear-gradient(#ffffff 70%,#e6e6e6);padding-left:9px;padding-top:7px">Matrix for X plane</div>
<div class="a" style="left:552px;top:591px;width:31px;height:2px;background:#c4c4c4"></div>
<div class="cm" style="left:581px;top:571px;width:270px;height:42px;border-radius:21.0px;border:2px solid #a6a6a6;background:linear-gradient(#ffffff 70%,#e6e6e6);padding-left:9px;padding-top:7px">Matrix for Y plane</div>
<div class="a" style="left:368px;top:1387px;width:32px;height:2px;background:#c4c4c4"></div>
<div class="cm" style="left:398px;top:1367px;width:269px;height:42px;border-radius:21.0px;border:2px solid #a6a6a6;background:linear-gradient(#ffffff 70%,#e6e6e6);padding-left:9px;padding-top:7px">Get Matrix info</div>
<svg width="2340" height="1686"><defs><linearGradient id="bg" x1="0" y1="0" x2="0" y2="1"><stop offset="0.7" stop-color="#ffffff"/><stop offset="1" stop-color="#e4e4e4"/></linearGradient></defs><path d="M986.5,766 L1221.5,766 A17,17 0 0 1 1238.5,783 L1238.5,811 A17,17 0 0 1 1221.5,828 L986.5,828 A17,17 0 0 1 969.5,811 L969.5,808 L940,797 L969.5,786 L969.5,783 A17,17 0 0 1 986.5,766 Z" fill="url(#bg)" stroke="#a6a6a6" stroke-width="2"/><path d="M697,936 L932,936 A17,17 0 0 1 949,953 L949,981.5 A17,17 0 0 1 932,998.5 L697,998.5 A17,17 0 0 1 680,981.5 L680,977.5 L650,966.5 L680,955.5 L680,953 A17,17 0 0 1 697,936 Z" fill="url(#bg)" stroke="#a6a6a6" stroke-width="2"/><path d="M986.5,1014 L1221.5,1014 A17,17 0 0 1 1238.5,1031 L1238.5,1059 A17,17 0 0 1 1221.5,1076 L986.5,1076 A17,17 0 0 1 969.5,1059 L969.5,1055 L940,1044 L969.5,1033 L969.5,1031 A17,17 0 0 1 986.5,1014 Z" fill="url(#bg)" stroke="#a6a6a6" stroke-width="2"/><path d="M1060,1343 L1296,1343 A17,17 0 0 1 1313,1360 L1313,1412 A17,17 0 0 1 1296,1429 L1060,1429 A17,17 0 0 1 1043,1412 L1043,1400.5 L1014,1386 L1043,1371.5 L1043,1360 A17,17 0 0 1 1060,1343 Z" fill="url(#bg)" stroke="#a6a6a6" stroke-width="2"/></svg>
<div class="cm" style="left:980.5px;top:774px">Values being sent to X &amp;
Y plane of sphere shape</div>
<div class="cm" style="left:691px;top:944px">Used to move/resize
shape with mouse</div>
<div class="cm" style="left:980.5px;top:1022px">Umenu to change how
shape is drawn</div>
<div class="cm" style="left:1054px;top:1351px">By pressing the ESC key
will toggle between
fullscreen</div>
<div class="a" style="left:1536px;top:660px;width:640px;height:512px;border-radius:9px 9px 4px 4px;box-shadow:0 14px 24px -6px rgba(0,0,0,0.5),0 0 3px rgba(0,0,0,0.3)"></div>
<div class="a" style="left:1536px;top:660px;width:640px;height:32px;border-radius:9px 9px 0 0;background:linear-gradient(#ececec,#d8d8d8);border-bottom:1px solid #b8b8b8"></div>
<div class="a" style="left:1536px;top:692px;width:640px;height:480px;background:#000;border-radius:0 0 4px 4px"></div>
<div class="a" style="left:1536px;top:662px;width:640px;text-align:center;font-size:23px;line-height:28px;color:#4a4a4a">genn</div>
<svg width="2340" height="1686"><clipPath id="imc"><rect x="1536" y="692" width="640" height="480"/></clipPath><g clip-path="url(#imc)"><line x1="2068.2" y1="930.7" x2="2067.1" y2="952.2" stroke="#f070b8" stroke-width="1.2"/><line x1="2067.1" y1="952.2" x2="2063.8" y2="973.5" stroke="#ec69b6" stroke-width="1.2"/><line x1="2063.8" y1="973.5" x2="2058.4" y2="994.4" stroke="#e963b4" stroke-width="1.2"/><line x1="2058.4" y1="994.4" x2="2051.0" y2="1014.6" stroke="#e65db3" stroke-width="1.2"/><line x1="2051.0" y1="1014.6" x2="2041.5" y2="1034.0" stroke="#e357b1" stroke-width="1.2"/><line x1="2041.5" y1="1034.0" x2="2030.1" y2="1052.3" stroke="#e051b0" stroke-width="1.2"/><line x1="2030.1" y1="1052.3" x2="2016.9" y2="1069.3" stroke="#da4ab3" stroke-width="1.2"/><line x1="2016.9" y1="1069.3" x2="2002.0" y2="1084.9" stroke="#d444b8" stroke-width="1.2"/><line x1="2002.0" y1="1084.9" x2="1985.7" y2="1099.0" stroke="#ce3ebd" stroke-width="1.2"/><line x1="1985.7" y1="1099.0" x2="1968.0" y2="1111.3" stroke="#c838c1" stroke-width="1.2"/><line x1="1968.0" y1="1111.3" x2="1949.1" y2="1121.8" stroke="#c232c6" stroke-width="1.2"/><line x1="1949.1" y1="1121.8" x2="1929.3" y2="1130.3" stroke="#b92dcb" stroke-width="1.2"/><line x1="1929.3" y1="1130.3" x2="1908.7" y2="1136.7" stroke="#b02acf" stroke-width="1.2"/><line x1="1908.7" y1="1136.7" x2="1887.6" y2="1141.0" stroke="#a727d4" stroke-width="1.2"/><line x1="1887.6" y1="1141.0" x2="1866.2" y2="1143.2" stroke="#9d24d9" stroke-width="1.2"/><line x1="1866.2" y1="1143.2" x2="1844.6" y2="1143.2" stroke="#9421dd" stroke-width="1.2"/><line x1="1844.6" y1="1143.2" x2="1823.2" y2="1141.0" stroke="#8a21e0" stroke-width="1.2"/><line x1="1823.2" y1="1141.0" x2="1802.1" y2="1136.7" stroke="#7f25e0" stroke-width="1.2"/><line x1="1802.1" y1="1136.7" x2="1781.5" y2="1130.3" stroke="#7429e0" stroke-width="1.2"/><line x1="1781.5" y1="1130.3" x2="1761.7" y2="1121.8" stroke="#682de0" stroke-width="1.2"/><line x1="1761.7" y1="1121.8" x2="1742.8" y2="1111.3" stroke="#5d31e0" stroke-width="1.2"/><line x1="1742.8" y1="1111.3" x2="1725.1" y2="1099.0" stroke="#5238e0" stroke-width="1.2"/><line x1="1725.1" y1="1099.0" x2="1708.8" y2="1084.9" stroke="#4740e0" stroke-width="1.2"/><line x1="1708.8" y1="1084.9" x2="1693.9" y2="1069.3" stroke="#3c47e0" stroke-width="1.2"/><line x1="1693.9" y1="1069.3" x2="1680.7" y2="1052.3" stroke="#314fe0" stroke-width="1.2"/><line x1="1680.7" y1="1052.3" x2="1669.3" y2="1034.0" stroke="#2d58de" stroke-width="1.2"/><line x1="1669.3" y1="1034.0" x2="1659.8" y2="1014.6" stroke="#2a61dd" stroke-width="1.2"/><line x1="1659.8" y1="1014.6" x2="1652.4" y2="994.4" stroke="#276adb" stroke-width="1.2"/><line x1="1652.4" y1="994.4" x2="1647.0" y2="973.5" stroke="#2374d9" stroke-width="1.2"/><line x1="1647.0" y1="973.5" x2="1643.7" y2="952.2" stroke="#207dd8" stroke-width="1.2"/><line x1="1643.7" y1="952.2" x2="1642.6" y2="930.7" stroke="#2084d6" stroke-width="1.2"/><line x1="1642.6" y1="930.7" x2="1643.7" y2="909.2" stroke="#208ad5" stroke-width="1.2"/><line x1="1643.7" y1="909.2" x2="1647.0" y2="887.9" stroke="#2090d3" stroke-width="1.2"/><line x1="1647.0" y1="887.9" x2="1652.4" y2="867.0" stroke="#2097d2" stroke-width="1.2"/><line x1="1652.4" y1="867.0" x2="1659.8" y2="846.8" stroke="#209dd0" stroke-width="1.2"/><line x1="1659.8" y1="846.8" x2="1669.3" y2="827.4" stroke="#24a5cc" stroke-width="1.2"/><line x1="1669.3" y1="827.4" x2="1680.7" y2="809.1" stroke="#2baec7" stroke-width="1.2"/><line x1="1680.7" y1="809.1" x2="1693.9" y2="792.1" stroke="#32b7c1" stroke-width="1.2"/><line x1="1693.9" y1="792.1" x2="1708.8" y2="776.5" stroke="#3ac1bc" stroke-width="1.2"/><line x1="1708.8" y1="776.5" x2="1725.1" y2="762.4" stroke="#42c9b7" stroke-width="1.2"/><line x1="1725.1" y1="762.4" x2="1742.8" y2="750.1" stroke="#4aceb4" stroke-width="1.2"/><line x1="1742.8" y1="750.1" x2="1761.7" y2="739.6" stroke="#52d3b1" stroke-width="1.2"/><line x1="1761.7" y1="739.6" x2="1781.5" y2="731.1" stroke="#5ad8ad" stroke-width="1.2"/><line x1="1781.5" y1="731.1" x2="1802.1" y2="724.7" stroke="#63ddaa" stroke-width="1.2"/><line x1="1802.1" y1="724.7" x2="1823.2" y2="720.4" stroke="#6be3a7" stroke-width="1.2"/><line x1="1823.2" y1="720.4" x2="1844.6" y2="718.2" stroke="#73e8a4" stroke-width="1.2"/><line x1="1844.6" y1="718.2" x2="1866.2" y2="718.2" stroke="#7beda1" stroke-width="1.2"/><line x1="1866.2" y1="718.2" x2="1887.6" y2="720.4" stroke="#86eea2" stroke-width="1.2"/><line x1="1887.6" y1="720.4" x2="1908.7" y2="724.7" stroke="#94eba6" stroke-width="1.2"/><line x1="1908.7" y1="724.7" x2="1929.3" y2="731.1" stroke="#a2e8ab" stroke-width="1.2"/><line x1="1929.3" y1="731.1" x2="1949.1" y2="739.6" stroke="#b0e5b0" stroke-width="1.2"/><line x1="1949.1" y1="739.6" x2="1968.0" y2="750.1" stroke="#bee2b4" stroke-width="1.2"/><line x1="1968.0" y1="750.1" x2="1985.7" y2="762.4" stroke="#caddb8" stroke-width="1.2"/><line x1="1985.7" y1="762.4" x2="2002.0" y2="776.5" stroke="#d0d7ba" stroke-width="1.2"/><line x1="2002.0" y1="776.5" x2="2016.9" y2="792.1" stroke="#d6d1bb" stroke-width="1.2"/><line x1="2016.9" y1="792.1" x2="2030.1" y2="809.1" stroke="#dccbbd" stroke-width="1.2"/><line x1="2030.1" y1="809.1" x2="2041.5" y2="827.4" stroke="#e2c5be" stroke-width="1.2"/><line x1="2041.5" y1="827.4" x2="2051.0" y2="846.8" stroke="#e8bdbf" stroke-width="1.2"/><line x1="2051.0" y1="846.8" x2="2058.4" y2="867.0" stroke="#e9adbe" stroke-width="1.2"/><line x1="2058.4" y1="867.0" x2="2063.8" y2="887.9" stroke="#eb9ebc" stroke-width="1.2"/><line x1="2063.8" y1="887.9" x2="2067.1" y2="909.2" stroke="#ec8ebb" stroke-width="1.2"/><line x1="2067.1" y1="909.2" x2="2068.2" y2="930.7" stroke="#ee7fb9" stroke-width="1.2"/><circle cx="2068.2" cy="930.7" r="3.7" fill="#f070b8"/><circle cx="2067.1" cy="952.2" r="3.7" fill="#ec69b6"/><circle cx="2063.8" cy="973.5" r="3.7" fill="#e963b4"/><circle cx="2058.4" cy="994.4" r="3.7" fill="#e65db3"/><circle cx="2051.0" cy="1014.6" r="3.7" fill="#e357b1"/><circle cx="2041.5" cy="1034.0" r="3.7" fill="#e051b0"/><circle cx="2030.1" cy="1052.3" r="3.7" fill="#da4ab3"/><circle cx="2016.9" cy="1069.3" r="3.7" fill="#d444b8"/><circle cx="2002.0" cy="1084.9" r="3.7" fill="#ce3ebd"/><circle cx="1985.7" cy="1099.0" r="3.7" fill="#c838c1"/><circle cx="1968.0" cy="1111.3" r="3.7" fill="#c232c6"/><circle cx="1949.1" cy="1121.8" r="3.7" fill="#b92dcb"/><circle cx="1929.3" cy="1130.3" r="3.7" fill="#b02acf"/><circle cx="1908.7" cy="1136.7" r="3.7" fill="#a727d4"/><circle cx="1887.6" cy="1141.0" r="3.7" fill="#9d24d9"/><circle cx="1866.2" cy="1143.2" r="3.7" fill="#9421dd"/><circle cx="1844.6" cy="1143.2" r="3.7" fill="#8a21e0"/><circle cx="1823.2" cy="1141.0" r="3.7" fill="#7f25e0"/><circle cx="1802.1" cy="1136.7" r="3.7" fill="#7429e0"/><circle cx="1781.5" cy="1130.3" r="3.7" fill="#682de0"/><circle cx="1761.7" cy="1121.8" r="3.7" fill="#5d31e0"/><circle cx="1742.8" cy="1111.3" r="3.7" fill="#5238e0"/><circle cx="1725.1" cy="1099.0" r="3.7" fill="#4740e0"/><circle cx="1708.8" cy="1084.9" r="3.7" fill="#3c47e0"/><circle cx="1693.9" cy="1069.3" r="3.7" fill="#314fe0"/><circle cx="1680.7" cy="1052.3" r="3.7" fill="#2d58de"/><circle cx="1669.3" cy="1034.0" r="3.7" fill="#2a61dd"/><circle cx="1659.8" cy="1014.6" r="3.7" fill="#276adb"/><circle cx="1652.4" cy="994.4" r="3.7" fill="#2374d9"/><circle cx="1647.0" cy="973.5" r="3.7" fill="#207dd8"/><circle cx="1643.7" cy="952.2" r="3.7" fill="#2084d6"/><circle cx="1642.6" cy="930.7" r="3.7" fill="#208ad5"/><circle cx="1643.7" cy="909.2" r="3.7" fill="#2090d3"/><circle cx="1647.0" cy="887.9" r="3.7" fill="#2097d2"/><circle cx="1652.4" cy="867.0" r="3.7" fill="#209dd0"/><circle cx="1659.8" cy="846.8" r="3.7" fill="#24a5cc"/><circle cx="1669.3" cy="827.4" r="3.7" fill="#2baec7"/><circle cx="1680.7" cy="809.1" r="3.7" fill="#32b7c1"/><circle cx="1693.9" cy="792.1" r="3.7" fill="#3ac1bc"/><circle cx="1708.8" cy="776.5" r="3.7" fill="#42c9b7"/><circle cx="1725.1" cy="762.4" r="3.7" fill="#4aceb4"/><circle cx="1742.8" cy="750.1" r="3.7" fill="#52d3b1"/><circle cx="1761.7" cy="739.6" r="3.7" fill="#5ad8ad"/><circle cx="1781.5" cy="731.1" r="3.7" fill="#63ddaa"/><circle cx="1802.1" cy="724.7" r="3.7" fill="#6be3a7"/><circle cx="1823.2" cy="720.4" r="3.7" fill="#73e8a4"/><circle cx="1844.6" cy="718.2" r="3.7" fill="#7beda1"/><circle cx="1866.2" cy="718.2" r="3.7" fill="#86eea2"/><circle cx="1887.6" cy="720.4" r="3.7" fill="#94eba6"/><circle cx="1908.7" cy="724.7" r="3.7" fill="#a2e8ab"/><circle cx="1929.3" cy="731.1" r="3.7" fill="#b0e5b0"/><circle cx="1949.1" cy="739.6" r="3.7" fill="#bee2b4"/><circle cx="1968.0" cy="750.1" r="3.7" fill="#caddb8"/><circle cx="1985.7" cy="762.4" r="3.7" fill="#d0d7ba"/><circle cx="2002.0" cy="776.5" r="3.7" fill="#d6d1bb"/><circle cx="2016.9" cy="792.1" r="3.7" fill="#dccbbd"/><circle cx="2030.1" cy="809.1" r="3.7" fill="#e2c5be"/><circle cx="2041.5" cy="827.4" r="3.7" fill="#e8bdbf"/><circle cx="2051.0" cy="846.8" r="3.7" fill="#e9adbe"/><circle cx="2058.4" cy="867.0" r="3.7" fill="#eb9ebc"/><circle cx="2063.8" cy="887.9" r="3.7" fill="#ec8ebb"/><circle cx="2067.1" cy="909.2" r="3.7" fill="#ee7fb9"/><line x1="2064.2" y1="930.7" x2="2063.1" y2="951.8" stroke="#f070b8" stroke-width="1.0"/><line x1="2063.1" y1="951.8" x2="2059.9" y2="972.7" stroke="#ec69b6" stroke-width="1.0"/><line x1="2059.9" y1="972.7" x2="2054.6" y2="993.2" stroke="#e963b4" stroke-width="1.0"/><line x1="2054.6" y1="993.2" x2="2047.3" y2="1013.0" stroke="#e65db3" stroke-width="1.0"/><line x1="2047.3" y1="1013.0" x2="2038.0" y2="1032.0" stroke="#e357b1" stroke-width="1.0"/><line x1="2038.0" y1="1032.0" x2="2026.8" y2="1050.0" stroke="#e051b0" stroke-width="1.0"/><line x1="2026.8" y1="1050.0" x2="2013.8" y2="1066.7" stroke="#da4ab3" stroke-width="1.0"/><line x1="2013.8" y1="1066.7" x2="1999.3" y2="1082.0" stroke="#d444b8" stroke-width="1.0"/><line x1="1999.3" y1="1082.0" x2="1983.2" y2="1095.8" stroke="#ce3ebd" stroke-width="1.0"/><line x1="1983.2" y1="1095.8" x2="1965.8" y2="1107.9" stroke="#c838c1" stroke-width="1.0"/><line x1="1965.8" y1="1107.9" x2="1947.4" y2="1118.2" stroke="#c232c6" stroke-width="1.0"/><line x1="1947.4" y1="1118.2" x2="1927.9" y2="1126.5" stroke="#b92dcb" stroke-width="1.0"/><line x1="1927.9" y1="1126.5" x2="1907.7" y2="1132.8" stroke="#b02acf" stroke-width="1.0"/><line x1="1907.7" y1="1132.8" x2="1887.0" y2="1137.1" stroke="#a727d4" stroke-width="1.0"/><line x1="1887.0" y1="1137.1" x2="1866.0" y2="1139.2" stroke="#9d24d9" stroke-width="1.0"/><line x1="1866.0" y1="1139.2" x2="1844.8" y2="1139.2" stroke="#9421dd" stroke-width="1.0"/><line x1="1844.8" y1="1139.2" x2="1823.8" y2="1137.1" stroke="#8a21e0" stroke-width="1.0"/><line x1="1823.8" y1="1137.1" x2="1803.1" y2="1132.8" stroke="#7f25e0" stroke-width="1.0"/><line x1="1803.1" y1="1132.8" x2="1782.9" y2="1126.5" stroke="#7429e0" stroke-width="1.0"/><line x1="1782.9" y1="1126.5" x2="1763.4" y2="1118.2" stroke="#682de0" stroke-width="1.0"/><line x1="1763.4" y1="1118.2" x2="1745.0" y2="1107.9" stroke="#5d31e0" stroke-width="1.0"/><line x1="1745.0" y1="1107.9" x2="1727.6" y2="1095.8" stroke="#5238e0" stroke-width="1.0"/><line x1="1727.6" y1="1095.8" x2="1711.5" y2="1082.0" stroke="#4740e0" stroke-width="1.0"/><line x1="1711.5" y1="1082.0" x2="1697.0" y2="1066.7" stroke="#3c47e0" stroke-width="1.0"/><line x1="1697.0" y1="1066.7" x2="1684.0" y2="1050.0" stroke="#314fe0" stroke-width="1.0"/><line x1="1684.0" y1="1050.0" x2="1672.8" y2="1032.0" stroke="#2d58de" stroke-width="1.0"/><line x1="1672.8" y1="1032.0" x2="1663.5" y2="1013.0" stroke="#2a61dd" stroke-width="1.0"/><line x1="1663.5" y1="1013.0" x2="1656.2" y2="993.2" stroke="#276adb" stroke-width="1.0"/><line x1="1656.2" y1="993.2" x2="1650.9" y2="972.7" stroke="#2374d9" stroke-width="1.0"/><line x1="1650.9" y1="972.7" x2="1647.7" y2="951.8" stroke="#207dd8" stroke-width="1.0"/><line x1="1647.7" y1="951.8" x2="1646.6" y2="930.7" stroke="#2084d6" stroke-width="1.0"/><line x1="1646.6" y1="930.7" x2="1647.7" y2="909.6" stroke="#208ad5" stroke-width="1.0"/><line x1="1647.7" y1="909.6" x2="1650.9" y2="888.7" stroke="#2090d3" stroke-width="1.0"/><line x1="1650.9" y1="888.7" x2="1656.2" y2="868.2" stroke="#2097d2" stroke-width="1.0"/><line x1="1656.2" y1="868.2" x2="1663.5" y2="848.4" stroke="#209dd0" stroke-width="1.0"/><line x1="1663.5" y1="848.4" x2="1672.8" y2="829.4" stroke="#24a5cc" stroke-width="1.0"/><line x1="1672.8" y1="829.4" x2="1684.0" y2="811.4" stroke="#2baec7" stroke-width="1.0"/><line x1="1684.0" y1="811.4" x2="1697.0" y2="794.7" stroke="#32b7c1" stroke-width="1.0"/><line x1="1697.0" y1="794.7" x2="1711.5" y2="779.4" stroke="#3ac1bc" stroke-width="1.0"/><line x1="1711.5" y1="779.4" x2="1727.6" y2="765.6" stroke="#42c9b7" stroke-width="1.0"/><line x1="1727.6" y1="765.6" x2="1745.0" y2="753.5" stroke="#4aceb4" stroke-width="1.0"/><line x1="1745.0" y1="753.5" x2="1763.4" y2="743.2" stroke="#52d3b1" stroke-width="1.0"/><line x1="1763.4" y1="743.2" x2="1782.9" y2="734.9" stroke="#5ad8ad" stroke-width="1.0"/><line x1="1782.9" y1="734.9" x2="1803.1" y2="728.6" stroke="#63ddaa" stroke-width="1.0"/><line x1="1803.1" y1="728.6" x2="1823.8" y2="724.3" stroke="#6be3a7" stroke-width="1.0"/><line x1="1823.8" y1="724.3" x2="1844.8" y2="722.2" stroke="#73e8a4" stroke-width="1.0"/><line x1="1844.8" y1="722.2" x2="1866.0" y2="722.2" stroke="#7beda1" stroke-width="1.0"/><line x1="1866.0" y1="722.2" x2="1887.0" y2="724.3" stroke="#86eea2" stroke-width="1.0"/><line x1="1887.0" y1="724.3" x2="1907.7" y2="728.6" stroke="#94eba6" stroke-width="1.0"/><line x1="1907.7" y1="728.6" x2="1927.9" y2="734.9" stroke="#a2e8ab" stroke-width="1.0"/><line x1="1927.9" y1="734.9" x2="1947.4" y2="743.2" stroke="#b0e5b0" stroke-width="1.0"/><line x1="1947.4" y1="743.2" x2="1965.8" y2="753.5" stroke="#bee2b4" stroke-width="1.0"/><line x1="1965.8" y1="753.5" x2="1983.2" y2="765.6" stroke="#caddb8" stroke-width="1.0"/><line x1="1983.2" y1="765.6" x2="1999.3" y2="779.4" stroke="#d0d7ba" stroke-width="1.0"/><line x1="1999.3" y1="779.4" x2="2013.8" y2="794.7" stroke="#d6d1bb" stroke-width="1.0"/><line x1="2013.8" y1="794.7" x2="2026.8" y2="811.4" stroke="#dccbbd" stroke-width="1.0"/><line x1="2026.8" y1="811.4" x2="2038.0" y2="829.4" stroke="#e2c5be" stroke-width="1.0"/><line x1="2038.0" y1="829.4" x2="2047.3" y2="848.4" stroke="#e8bdbf" stroke-width="1.0"/><line x1="2047.3" y1="848.4" x2="2054.6" y2="868.2" stroke="#e9adbe" stroke-width="1.0"/><line x1="2054.6" y1="868.2" x2="2059.9" y2="888.7" stroke="#eb9ebc" stroke-width="1.0"/><line x1="2059.9" y1="888.7" x2="2063.1" y2="909.6" stroke="#ec8ebb" stroke-width="1.0"/><line x1="2063.1" y1="909.6" x2="2064.2" y2="930.7" stroke="#ee7fb9" stroke-width="1.0"/><circle cx="2064.2" cy="930.7" r="3.4" fill="#f070b8"/><circle cx="2063.1" cy="951.8" r="3.4" fill="#ec69b6"/><circle cx="2059.9" cy="972.7" r="3.4" fill="#e963b4"/><circle cx="2054.6" cy="993.2" r="3.4" fill="#e65db3"/><circle cx="2047.3" cy="1013.0" r="3.4" fill="#e357b1"/><circle cx="2038.0" cy="1032.0" r="3.4" fill="#e051b0"/><circle cx="2026.8" cy="1050.0" r="3.4" fill="#da4ab3"/><circle cx="2013.8" cy="1066.7" r="3.4" fill="#d444b8"/><circle cx="1999.3" cy="1082.0" r="3.4" fill="#ce3ebd"/><circle cx="1983.2" cy="1095.8" r="3.4" fill="#c838c1"/><circle cx="1965.8" cy="1107.9" r="3.4" fill="#c232c6"/><circle cx="1947.4" cy="1118.2" r="3.4" fill="#b92dcb"/><circle cx="1927.9" cy="1126.5" r="3.4" fill="#b02acf"/><circle cx="1907.7" cy="1132.8" r="3.4" fill="#a727d4"/><circle cx="1887.0" cy="1137.1" r="3.4" fill="#9d24d9"/><circle cx="1866.0" cy="1139.2" r="3.4" fill="#9421dd"/><circle cx="1844.8" cy="1139.2" r="3.4" fill="#8a21e0"/><circle cx="1823.8" cy="1137.1" r="3.4" fill="#7f25e0"/><circle cx="1803.1" cy="1132.8" r="3.4" fill="#7429e0"/><circle cx="1782.9" cy="1126.5" r="3.4" fill="#682de0"/><circle cx="1763.4" cy="1118.2" r="3.4" fill="#5d31e0"/><circle cx="1745.0" cy="1107.9" r="3.4" fill="#5238e0"/><circle cx="1727.6" cy="1095.8" r="3.4" fill="#4740e0"/><circle cx="1711.5" cy="1082.0" r="3.4" fill="#3c47e0"/><circle cx="1697.0" cy="1066.7" r="3.4" fill="#314fe0"/><circle cx="1684.0" cy="1050.0" r="3.4" fill="#2d58de"/><circle cx="1672.8" cy="1032.0" r="3.4" fill="#2a61dd"/><circle cx="1663.5" cy="1013.0" r="3.4" fill="#276adb"/><circle cx="1656.2" cy="993.2" r="3.4" fill="#2374d9"/><circle cx="1650.9" cy="972.7" r="3.4" fill="#207dd8"/><circle cx="1647.7" cy="951.8" r="3.4" fill="#2084d6"/><circle cx="1646.6" cy="930.7" r="3.4" fill="#208ad5"/><circle cx="1647.7" cy="909.6" r="3.4" fill="#2090d3"/><circle cx="1650.9" cy="888.7" r="3.4" fill="#2097d2"/><circle cx="1656.2" cy="868.2" r="3.4" fill="#209dd0"/><circle cx="1663.5" cy="848.4" r="3.4" fill="#24a5cc"/><circle cx="1672.8" cy="829.4" r="3.4" fill="#2baec7"/><circle cx="1684.0" cy="811.4" r="3.4" fill="#32b7c1"/><circle cx="1697.0" cy="794.7" r="3.4" fill="#3ac1bc"/><circle cx="1711.5" cy="779.4" r="3.4" fill="#42c9b7"/><circle cx="1727.6" cy="765.6" r="3.4" fill="#4aceb4"/><circle cx="1745.0" cy="753.5" r="3.4" fill="#52d3b1"/><circle cx="1763.4" cy="743.2" r="3.4" fill="#5ad8ad"/><circle cx="1782.9" cy="734.9" r="3.4" fill="#63ddaa"/><circle cx="1803.1" cy="728.6" r="3.4" fill="#6be3a7"/><circle cx="1823.8" cy="724.3" r="3.4" fill="#73e8a4"/><circle cx="1844.8" cy="722.2" r="3.4" fill="#7beda1"/><circle cx="1866.0" cy="722.2" r="3.4" fill="#86eea2"/><circle cx="1887.0" cy="724.3" r="3.4" fill="#94eba6"/><circle cx="1907.7" cy="728.6" r="3.4" fill="#a2e8ab"/><circle cx="1927.9" cy="734.9" r="3.4" fill="#b0e5b0"/><circle cx="1947.4" cy="743.2" r="3.4" fill="#bee2b4"/><circle cx="1965.8" cy="753.5" r="3.4" fill="#caddb8"/><circle cx="1983.2" cy="765.6" r="3.4" fill="#d0d7ba"/><circle cx="1999.3" cy="779.4" r="3.4" fill="#d6d1bb"/><circle cx="2013.8" cy="794.7" r="3.4" fill="#dccbbd"/><circle cx="2026.8" cy="811.4" r="3.4" fill="#e2c5be"/><circle cx="2038.0" cy="829.4" r="3.4" fill="#e8bdbf"/><circle cx="2047.3" cy="848.4" r="3.4" fill="#e9adbe"/><circle cx="2054.6" cy="868.2" r="3.4" fill="#eb9ebc"/><circle cx="2059.9" cy="888.7" r="3.4" fill="#ec8ebb"/><circle cx="2063.1" cy="909.6" r="3.4" fill="#ee7fb9"/><line x1="2025.6" y1="922.9" x2="2024.7" y2="940.7" stroke="#c080f0" stroke-width="1.1"/><line x1="2024.7" y1="940.7" x2="2022.0" y2="958.2" stroke="#bc79f0" stroke-width="1.1"/><line x1="2022.0" y1="958.2" x2="2017.6" y2="975.4" stroke="#b973f0" stroke-width="1.1"/><line x1="2017.6" y1="975.4" x2="2011.4" y2="992.1" stroke="#b66df0" stroke-width="1.1"/><line x1="2011.4" y1="992.1" x2="2003.5" y2="1008.1" stroke="#b367f0" stroke-width="1.1"/><line x1="2003.5" y1="1008.1" x2="1994.1" y2="1023.2" stroke="#b061f0" stroke-width="1.1"/><line x1="1994.1" y1="1023.2" x2="1983.3" y2="1037.2" stroke="#ad5df0" stroke-width="1.1"/><line x1="1983.3" y1="1037.2" x2="1971.0" y2="1050.1" stroke="#aa5af0" stroke-width="1.1"/><line x1="1971.0" y1="1050.1" x2="1957.5" y2="1061.7" stroke="#a757f0" stroke-width="1.1"/><line x1="1957.5" y1="1061.7" x2="1942.9" y2="1071.8" stroke="#a454f0" stroke-width="1.1"/><line x1="1942.9" y1="1071.8" x2="1927.4" y2="1080.5" stroke="#a151f0" stroke-width="1.1"/><line x1="1927.4" y1="1080.5" x2="1911.1" y2="1087.5" stroke="#9d4df0" stroke-width="1.1"/><line x1="1911.1" y1="1087.5" x2="1894.1" y2="1092.8" stroke="#9a4af0" stroke-width="1.1"/><line x1="1894.1" y1="1092.8" x2="1876.7" y2="1096.4" stroke="#9747f0" stroke-width="1.1"/><line x1="1876.7" y1="1096.4" x2="1859.0" y2="1098.2" stroke="#9444f0" stroke-width="1.1"/><line x1="1859.0" y1="1098.2" x2="1841.2" y2="1098.2" stroke="#9141f0" stroke-width="1.1"/><line x1="1841.2" y1="1098.2" x2="1823.5" y2="1096.4" stroke="#8c41f0" stroke-width="1.1"/><line x1="1823.5" y1="1096.4" x2="1806.1" y2="1092.8" stroke="#8644f0" stroke-width="1.1"/><line x1="1806.1" y1="1092.8" x2="1789.1" y2="1087.5" stroke="#8047f0" stroke-width="1.1"/><line x1="1789.1" y1="1087.5" x2="1772.8" y2="1080.5" stroke="#7a4af0" stroke-width="1.1"/><line x1="1772.8" y1="1080.5" x2="1757.3" y2="1071.8" stroke="#744df0" stroke-width="1.1"/><line x1="1757.3" y1="1071.8" x2="1742.7" y2="1061.7" stroke="#6d51f0" stroke-width="1.1"/><line x1="1742.7" y1="1061.7" x2="1729.2" y2="1050.1" stroke="#6656f0" stroke-width="1.1"/><line x1="1729.2" y1="1050.1" x2="1716.9" y2="1037.2" stroke="#5f5af0" stroke-width="1.1"/><line x1="1716.9" y1="1037.2" x2="1706.1" y2="1023.2" stroke="#585ff0" stroke-width="1.1"/><line x1="1706.1" y1="1023.2" x2="1696.7" y2="1008.1" stroke="#5164f0" stroke-width="1.1"/><line x1="1696.7" y1="1008.1" x2="1688.8" y2="992.1" stroke="#4b69ef" stroke-width="1.1"/><line x1="1688.8" y1="992.1" x2="1682.6" y2="975.4" stroke="#456fec" stroke-width="1.1"/><line x1="1682.6" y1="975.4" x2="1678.2" y2="958.2" stroke="#4075e9" stroke-width="1.1"/><line x1="1678.2" y1="958.2" x2="1675.5" y2="940.7" stroke="#3a7be6" stroke-width="1.1"/><line x1="1675.5" y1="940.7" x2="1674.6" y2="922.9" stroke="#3581e3" stroke-width="1.1"/><line x1="1674.6" y1="922.9" x2="1675.5" y2="905.1" stroke="#3088e0" stroke-width="1.1"/><line x1="1675.5" y1="905.1" x2="1678.2" y2="887.6" stroke="#328fe0" stroke-width="1.1"/><line x1="1678.2" y1="887.6" x2="1682.6" y2="870.4" stroke="#3496e0" stroke-width="1.1"/><line x1="1682.6" y1="870.4" x2="1688.8" y2="853.7" stroke="#369de0" stroke-width="1.1"/><line x1="1688.8" y1="853.7" x2="1696.7" y2="837.7" stroke="#38a4e0" stroke-width="1.1"/><line x1="1696.7" y1="837.7" x2="1706.1" y2="822.6" stroke="#3aace0" stroke-width="1.1"/><line x1="1706.1" y1="822.6" x2="1716.9" y2="808.6" stroke="#3cb3e0" stroke-width="1.1"/><line x1="1716.9" y1="808.6" x2="1729.2" y2="795.7" stroke="#3ebae0" stroke-width="1.1"/><line x1="1729.2" y1="795.7" x2="1742.7" y2="784.1" stroke="#41c0e0" stroke-width="1.1"/><line x1="1742.7" y1="784.1" x2="1757.3" y2="774.0" stroke="#47c3e1" stroke-width="1.1"/><line x1="1757.3" y1="774.0" x2="1772.8" y2="765.3" stroke="#4dc6e2" stroke-width="1.1"/><line x1="1772.8" y1="765.3" x2="1789.1" y2="758.3" stroke="#54cae3" stroke-width="1.1"/><line x1="1789.1" y1="758.3" x2="1806.1" y2="753.0" stroke="#5acde4" stroke-width="1.1"/><line x1="1806.1" y1="753.0" x2="1823.5" y2="749.4" stroke="#60d0e5" stroke-width="1.1"/><line x1="1823.5" y1="749.4" x2="1841.2" y2="747.6" stroke="#66d3e6" stroke-width="1.1"/><line x1="1841.2" y1="747.6" x2="1859.0" y2="747.6" stroke="#6cd6e7" stroke-width="1.1"/><line x1="1859.0" y1="747.6" x2="1876.7" y2="749.4" stroke="#74d6e8" stroke-width="1.1"/><line x1="1876.7" y1="749.4" x2="1894.1" y2="753.0" stroke="#7dd3e8" stroke-width="1.1"/><line x1="1894.1" y1="753.0" x2="1911.1" y2="758.3" stroke="#87d0e8" stroke-width="1.1"/><line x1="1911.1" y1="758.3" x2="1927.4" y2="765.3" stroke="#90cde8" stroke-width="1.1"/><line x1="1927.4" y1="765.3" x2="1942.9" y2="774.0" stroke="#99cae8" stroke-width="1.1"/><line x1="1942.9" y1="774.0" x2="1957.5" y2="784.1" stroke="#a2c6e8" stroke-width="1.1"/><line x1="1957.5" y1="784.1" x2="1971.0" y2="795.7" stroke="#aac3ea" stroke-width="1.1"/><line x1="1971.0" y1="795.7" x2="1983.3" y2="808.6" stroke="#b2c0eb" stroke-width="1.1"/><line x1="1983.3" y1="808.6" x2="1994.1" y2="822.6" stroke="#b9bded" stroke-width="1.1"/><line x1="1994.1" y1="822.6" x2="2003.5" y2="837.7" stroke="#c1baee" stroke-width="1.1"/><line x1="2003.5" y1="837.7" x2="2011.4" y2="853.7" stroke="#c7b6f0" stroke-width="1.1"/><line x1="2011.4" y1="853.7" x2="2017.6" y2="870.4" stroke="#c6abf0" stroke-width="1.1"/><line x1="2017.6" y1="870.4" x2="2022.0" y2="887.6" stroke="#c4a0f0" stroke-width="1.1"/><line x1="2022.0" y1="887.6" x2="2024.7" y2="905.1" stroke="#c395f0" stroke-width="1.1"/><line x1="2024.7" y1="905.1" x2="2025.6" y2="922.9" stroke="#c18af0" stroke-width="1.1"/><circle cx="2025.6" cy="922.9" r="3.4" fill="#c080f0"/><circle cx="2024.7" cy="940.7" r="3.4" fill="#bc79f0"/><circle cx="2022.0" cy="958.2" r="3.4" fill="#b973f0"/><circle cx="2017.6" cy="975.4" r="3.4" fill="#b66df0"/><circle cx="2011.4" cy="992.1" r="3.4" fill="#b367f0"/><circle cx="2003.5" cy="1008.1" r="3.4" fill="#b061f0"/><circle cx="1994.1" cy="1023.2" r="3.4" fill="#ad5df0"/><circle cx="1983.3" cy="1037.2" r="3.4" fill="#aa5af0"/><circle cx="1971.0" cy="1050.1" r="3.4" fill="#a757f0"/><circle cx="1957.5" cy="1061.7" r="3.4" fill="#a454f0"/><circle cx="1942.9" cy="1071.8" r="3.4" fill="#a151f0"/><circle cx="1927.4" cy="1080.5" r="3.4" fill="#9d4df0"/><circle cx="1911.1" cy="1087.5" r="3.4" fill="#9a4af0"/><circle cx="1894.1" cy="1092.8" r="3.4" fill="#9747f0"/><circle cx="1876.7" cy="1096.4" r="3.4" fill="#9444f0"/><circle cx="1859.0" cy="1098.2" r="3.4" fill="#9141f0"/><circle cx="1841.2" cy="1098.2" r="3.4" fill="#8c41f0"/><circle cx="1823.5" cy="1096.4" r="3.4" fill="#8644f0"/><circle cx="1806.1" cy="1092.8" r="3.4" fill="#8047f0"/><circle cx="1789.1" cy="1087.5" r="3.4" fill="#7a4af0"/><circle cx="1772.8" cy="1080.5" r="3.4" fill="#744df0"/><circle cx="1757.3" cy="1071.8" r="3.4" fill="#6d51f0"/><circle cx="1742.7" cy="1061.7" r="3.4" fill="#6656f0"/><circle cx="1729.2" cy="1050.1" r="3.4" fill="#5f5af0"/><circle cx="1716.9" cy="1037.2" r="3.4" fill="#585ff0"/><circle cx="1706.1" cy="1023.2" r="3.4" fill="#5164f0"/><circle cx="1696.7" cy="1008.1" r="3.4" fill="#4b69ef"/><circle cx="1688.8" cy="992.1" r="3.4" fill="#456fec"/><circle cx="1682.6" cy="975.4" r="3.4" fill="#4075e9"/><circle cx="1678.2" cy="958.2" r="3.4" fill="#3a7be6"/><circle cx="1675.5" cy="940.7" r="3.4" fill="#3581e3"/><circle cx="1674.6" cy="922.9" r="3.4" fill="#3088e0"/><circle cx="1675.5" cy="905.1" r="3.4" fill="#328fe0"/><circle cx="1678.2" cy="887.6" r="3.4" fill="#3496e0"/><circle cx="1682.6" cy="870.4" r="3.4" fill="#369de0"/><circle cx="1688.8" cy="853.7" r="3.4" fill="#38a4e0"/><circle cx="1696.7" cy="837.7" r="3.4" fill="#3aace0"/><circle cx="1706.1" cy="822.6" r="3.4" fill="#3cb3e0"/><circle cx="1716.9" cy="808.6" r="3.4" fill="#3ebae0"/><circle cx="1729.2" cy="795.7" r="3.4" fill="#41c0e0"/><circle cx="1742.7" cy="784.1" r="3.4" fill="#47c3e1"/><circle cx="1757.3" cy="774.0" r="3.4" fill="#4dc6e2"/><circle cx="1772.8" cy="765.3" r="3.4" fill="#54cae3"/><circle cx="1789.1" cy="758.3" r="3.4" fill="#5acde4"/><circle cx="1806.1" cy="753.0" r="3.4" fill="#60d0e5"/><circle cx="1823.5" cy="749.4" r="3.4" fill="#66d3e6"/><circle cx="1841.2" cy="747.6" r="3.4" fill="#6cd6e7"/><circle cx="1859.0" cy="747.6" r="3.4" fill="#74d6e8"/><circle cx="1876.7" cy="749.4" r="3.4" fill="#7dd3e8"/><circle cx="1894.1" cy="753.0" r="3.4" fill="#87d0e8"/><circle cx="1911.1" cy="758.3" r="3.4" fill="#90cde8"/><circle cx="1927.4" cy="765.3" r="3.4" fill="#99cae8"/><circle cx="1942.9" cy="774.0" r="3.4" fill="#a2c6e8"/><circle cx="1957.5" cy="784.1" r="3.4" fill="#aac3ea"/><circle cx="1971.0" cy="795.7" r="3.4" fill="#b2c0eb"/><circle cx="1983.3" cy="808.6" r="3.4" fill="#b9bded"/><circle cx="1994.1" cy="822.6" r="3.4" fill="#c1baee"/><circle cx="2003.5" cy="837.7" r="3.4" fill="#c7b6f0"/><circle cx="2011.4" cy="853.7" r="3.4" fill="#c6abf0"/><circle cx="2017.6" cy="870.4" r="3.4" fill="#c4a0f0"/><circle cx="2022.0" cy="887.6" r="3.4" fill="#c395f0"/><circle cx="2024.7" cy="905.1" r="3.4" fill="#c18af0"/><line x1="2045.4" y1="937.0" x2="2044.4" y2="955.8" stroke="#f07060" stroke-width="1.1"/><line x1="2044.4" y1="955.8" x2="2041.6" y2="974.5" stroke="#ee6660" stroke-width="1.1"/><line x1="2041.6" y1="974.5" x2="2036.9" y2="992.7" stroke="#ec5d60" stroke-width="1.1"/><line x1="2036.9" y1="992.7" x2="2030.3" y2="1010.4" stroke="#eb5460" stroke-width="1.1"/><line x1="2030.3" y1="1010.4" x2="2022.0" y2="1027.4" stroke="#e94a60" stroke-width="1.1"/><line x1="2022.0" y1="1027.4" x2="2012.0" y2="1043.4" stroke="#e84160" stroke-width="1.1"/><line x1="2012.0" y1="1043.4" x2="2000.5" y2="1058.3" stroke="#e43c61" stroke-width="1.1"/><line x1="2000.5" y1="1058.3" x2="1987.5" y2="1072.0" stroke="#df3762" stroke-width="1.1"/><line x1="1987.5" y1="1072.0" x2="1973.2" y2="1084.2" stroke="#da3264" stroke-width="1.1"/><line x1="1973.2" y1="1084.2" x2="1957.7" y2="1095.0" stroke="#d62e65" stroke-width="1.1"/><line x1="1957.7" y1="1095.0" x2="1941.2" y2="1104.2" stroke="#d12967" stroke-width="1.1"/><line x1="1941.2" y1="1104.2" x2="1923.9" y2="1111.6" stroke="#cb256b" stroke-width="1.1"/><line x1="1923.9" y1="1111.6" x2="1905.9" y2="1117.3" stroke="#c5226f" stroke-width="1.1"/><line x1="1905.9" y1="1117.3" x2="1887.4" y2="1121.1" stroke="#bf1f74" stroke-width="1.1"/><line x1="1887.4" y1="1121.1" x2="1868.6" y2="1123.0" stroke="#b91c79" stroke-width="1.1"/><line x1="1868.6" y1="1123.0" x2="1849.8" y2="1123.0" stroke="#b3197d" stroke-width="1.1"/><line x1="1849.8" y1="1123.0" x2="1831.0" y2="1121.1" stroke="#a7187e" stroke-width="1.1"/><line x1="1831.0" y1="1121.1" x2="1812.5" y2="1117.3" stroke="#97187a" stroke-width="1.1"/><line x1="1812.5" y1="1117.3" x2="1794.5" y2="1111.6" stroke="#871876" stroke-width="1.1"/><line x1="1794.5" y1="1111.6" x2="1777.2" y2="1104.2" stroke="#771872" stroke-width="1.1"/><line x1="1777.2" y1="1104.2" x2="1760.7" y2="1095.0" stroke="#67186f" stroke-width="1.1"/><line x1="1760.7" y1="1095.0" x2="1745.2" y2="1084.2" stroke="#5c1c6a" stroke-width="1.1"/><line x1="1745.2" y1="1084.2" x2="1730.9" y2="1072.0" stroke="#502065" stroke-width="1.1"/><line x1="1730.9" y1="1072.0" x2="1717.9" y2="1058.3" stroke="#442361" stroke-width="1.1"/><line x1="1717.9" y1="1058.3" x2="1706.4" y2="1043.4" stroke="#39275c" stroke-width="1.1"/><line x1="1706.4" y1="1043.4" x2="1696.4" y2="1027.4" stroke="#312e60" stroke-width="1.1"/><line x1="1696.4" y1="1027.4" x2="1688.1" y2="1010.4" stroke="#2a3664" stroke-width="1.1"/><line x1="1688.1" y1="1010.4" x2="1681.5" y2="992.7" stroke="#233d69" stroke-width="1.1"/><line x1="1681.5" y1="992.7" x2="1676.8" y2="974.5" stroke="#1c446e" stroke-width="1.1"/><line x1="1676.8" y1="974.5" x2="1674.0" y2="955.8" stroke="#185172" stroke-width="1.1"/><line x1="1674.0" y1="955.8" x2="1673.0" y2="937.0" stroke="#156177" stroke-width="1.1"/><line x1="1673.0" y1="937.0" x2="1674.0" y2="918.2" stroke="#12727c" stroke-width="1.1"/><line x1="1674.0" y1="918.2" x2="1676.8" y2="899.5" stroke="#10817f" stroke-width="1.1"/><line x1="1676.8" y1="899.5" x2="1681.5" y2="881.3" stroke="#178d7a" stroke-width="1.1"/><line x1="1681.5" y1="881.3" x2="1688.1" y2="863.6" stroke="#1e9876" stroke-width="1.1"/><line x1="1688.1" y1="863.6" x2="1696.4" y2="846.6" stroke="#25a471" stroke-width="1.1"/><line x1="1696.4" y1="846.6" x2="1706.4" y2="830.6" stroke="#2cb06c" stroke-width="1.1"/><line x1="1706.4" y1="830.6" x2="1717.9" y2="815.7" stroke="#33bb68" stroke-width="1.1"/><line x1="1717.9" y1="815.7" x2="1730.9" y2="802.0" stroke="#3ac763" stroke-width="1.1"/><line x1="1730.9" y1="802.0" x2="1745.2" y2="789.8" stroke="#42d060" stroke-width="1.1"/><line x1="1745.2" y1="789.8" x2="1760.7" y2="779.0" stroke="#4ad260" stroke-width="1.1"/><line x1="1760.7" y1="779.0" x2="1777.2" y2="769.8" stroke="#52d460" stroke-width="1.1"/><line x1="1777.2" y1="769.8" x2="1794.5" y2="762.4" stroke="#5ad660" stroke-width="1.1"/><line x1="1794.5" y1="762.4" x2="1812.5" y2="756.7" stroke="#63d860" stroke-width="1.1"/><line x1="1812.5" y1="756.7" x2="1831.0" y2="752.9" stroke="#6bda60" stroke-width="1.1"/><line x1="1831.0" y1="752.9" x2="1849.8" y2="751.0" stroke="#73dc60" stroke-width="1.1"/><line x1="1849.8" y1="751.0" x2="1868.6" y2="751.0" stroke="#7bde60" stroke-width="1.1"/><line x1="1868.6" y1="751.0" x2="1887.4" y2="752.9" stroke="#87e05c" stroke-width="1.1"/><line x1="1887.4" y1="752.9" x2="1905.9" y2="756.7" stroke="#97e056" stroke-width="1.1"/><line x1="1905.9" y1="756.7" x2="1923.9" y2="762.4" stroke="#a6e050" stroke-width="1.1"/><line x1="1923.9" y1="762.4" x2="1941.2" y2="769.8" stroke="#b6e04a" stroke-width="1.1"/><line x1="1941.2" y1="769.8" x2="1957.7" y2="779.0" stroke="#c5e044" stroke-width="1.1"/><line x1="1957.7" y1="779.0" x2="1973.2" y2="789.8" stroke="#d1dc41" stroke-width="1.1"/><line x1="1973.2" y1="789.8" x2="1987.5" y2="802.0" stroke="#d6d344" stroke-width="1.1"/><line x1="1987.5" y1="802.0" x2="2000.5" y2="815.7" stroke="#daca47" stroke-width="1.1"/><line x1="2000.5" y1="815.7" x2="2012.0" y2="830.6" stroke="#dfc14a" stroke-width="1.1"/><line x1="2012.0" y1="830.6" x2="2022.0" y2="846.6" stroke="#e4b74d" stroke-width="1.1"/><line x1="2022.0" y1="846.6" x2="2030.3" y2="863.6" stroke="#e8ad50" stroke-width="1.1"/><line x1="2030.3" y1="863.6" x2="2036.9" y2="881.3" stroke="#e9a153" stroke-width="1.1"/><line x1="2036.9" y1="881.3" x2="2041.6" y2="899.5" stroke="#eb9556" stroke-width="1.1"/><line x1="2041.6" y1="899.5" x2="2044.4" y2="918.2" stroke="#ec8859" stroke-width="1.1"/><line x1="2044.4" y1="918.2" x2="2045.4" y2="937.0" stroke="#ee7c5c" stroke-width="1.1"/><circle cx="2045.4" cy="937.0" r="3.4" fill="#f07060"/><circle cx="2044.4" cy="955.8" r="3.4" fill="#ee6660"/><circle cx="2041.6" cy="974.5" r="3.4" fill="#ec5d60"/><circle cx="2036.9" cy="992.7" r="3.4" fill="#eb5460"/><circle cx="2030.3" cy="1010.4" r="3.4" fill="#e94a60"/><circle cx="2022.0" cy="1027.4" r="3.4" fill="#e84160"/><circle cx="2012.0" cy="1043.4" r="3.4" fill="#e43c61"/><circle cx="2000.5" cy="1058.3" r="3.4" fill="#df3762"/><circle cx="1987.5" cy="1072.0" r="3.4" fill="#da3264"/><circle cx="1973.2" cy="1084.2" r="3.4" fill="#d62e65"/><circle cx="1957.7" cy="1095.0" r="3.4" fill="#d12967"/><circle cx="1941.2" cy="1104.2" r="3.4" fill="#cb256b"/><circle cx="1923.9" cy="1111.6" r="3.4" fill="#c5226f"/><circle cx="1905.9" cy="1117.3" r="3.4" fill="#bf1f74"/><circle cx="1887.4" cy="1121.1" r="3.4" fill="#b91c79"/><circle cx="1868.6" cy="1123.0" r="3.4" fill="#b3197d"/><circle cx="1849.8" cy="1123.0" r="3.4" fill="#a7187e"/><circle cx="1831.0" cy="1121.1" r="3.4" fill="#97187a"/><circle cx="1812.5" cy="1117.3" r="3.4" fill="#871876"/><circle cx="1794.5" cy="1111.6" r="3.4" fill="#771872"/><circle cx="1777.2" cy="1104.2" r="3.4" fill="#67186f"/><circle cx="1760.7" cy="1095.0" r="3.4" fill="#5c1c6a"/><circle cx="1745.2" cy="1084.2" r="3.4" fill="#502065"/><circle cx="1730.9" cy="1072.0" r="3.4" fill="#442361"/><circle cx="1717.9" cy="1058.3" r="3.4" fill="#39275c"/><circle cx="1706.4" cy="1043.4" r="3.4" fill="#312e60"/><circle cx="1696.4" cy="1027.4" r="3.4" fill="#2a3664"/><circle cx="1688.1" cy="1010.4" r="3.4" fill="#233d69"/><circle cx="1681.5" cy="992.7" r="3.4" fill="#1c446e"/><circle cx="1676.8" cy="974.5" r="3.4" fill="#185172"/><circle cx="1674.0" cy="955.8" r="3.4" fill="#156177"/><circle cx="1673.0" cy="937.0" r="3.4" fill="#12727c"/><circle cx="1674.0" cy="918.2" r="3.4" fill="#10817f"/><circle cx="1676.8" cy="899.5" r="3.4" fill="#178d7a"/><circle cx="1681.5" cy="881.3" r="3.4" fill="#1e9876"/><circle cx="1688.1" cy="863.6" r="3.4" fill="#25a471"/><circle cx="1696.4" cy="846.6" r="3.4" fill="#2cb06c"/><circle cx="1706.4" cy="830.6" r="3.4" fill="#33bb68"/><circle cx="1717.9" cy="815.7" r="3.4" fill="#3ac763"/><circle cx="1730.9" cy="802.0" r="3.4" fill="#42d060"/><circle cx="1745.2" cy="789.8" r="3.4" fill="#4ad260"/><circle cx="1760.7" cy="779.0" r="3.4" fill="#52d460"/><circle cx="1777.2" cy="769.8" r="3.4" fill="#5ad660"/><circle cx="1794.5" cy="762.4" r="3.4" fill="#63d860"/><circle cx="1812.5" cy="756.7" r="3.4" fill="#6bda60"/><circle cx="1831.0" cy="752.9" r="3.4" fill="#73dc60"/><circle cx="1849.8" cy="751.0" r="3.4" fill="#7bde60"/><circle cx="1868.6" cy="751.0" r="3.4" fill="#87e05c"/><circle cx="1887.4" cy="752.9" r="3.4" fill="#97e056"/><circle cx="1905.9" cy="756.7" r="3.4" fill="#a6e050"/><circle cx="1923.9" cy="762.4" r="3.4" fill="#b6e04a"/><circle cx="1941.2" cy="769.8" r="3.4" fill="#c5e044"/><circle cx="1957.7" cy="779.0" r="3.4" fill="#d1dc41"/><circle cx="1973.2" cy="789.8" r="3.4" fill="#d6d344"/><circle cx="1987.5" cy="802.0" r="3.4" fill="#daca47"/><circle cx="2000.5" cy="815.7" r="3.4" fill="#dfc14a"/><circle cx="2012.0" cy="830.6" r="3.4" fill="#e4b74d"/><circle cx="2022.0" cy="846.6" r="3.4" fill="#e8ad50"/><circle cx="2030.3" cy="863.6" r="3.4" fill="#e9a153"/><circle cx="2036.9" cy="881.3" r="3.4" fill="#eb9556"/><circle cx="2041.6" cy="899.5" r="3.4" fill="#ec8859"/><circle cx="2044.4" cy="918.2" r="3.4" fill="#ee7c5c"/><line x1="2008.1" y1="938.2" x2="2007.3" y2="953.2" stroke="#f08040" stroke-width="1.0"/><line x1="2007.3" y1="953.2" x2="2005.1" y2="968.0" stroke="#f07940" stroke-width="1.0"/><line x1="2005.1" y1="968.0" x2="2001.3" y2="982.6" stroke="#f07340" stroke-width="1.0"/><line x1="2001.3" y1="982.6" x2="1996.1" y2="996.6" stroke="#f06d40" stroke-width="1.0"/><line x1="1996.1" y1="996.6" x2="1989.5" y2="1010.1" stroke="#f06740" stroke-width="1.0"/><line x1="1989.5" y1="1010.1" x2="1981.5" y2="1022.9" stroke="#f06140" stroke-width="1.0"/><line x1="1981.5" y1="1022.9" x2="1972.3" y2="1034.7" stroke="#ed5a42" stroke-width="1.0"/><line x1="1972.3" y1="1034.7" x2="1962.0" y2="1045.6" stroke="#ea5445" stroke-width="1.0"/><line x1="1962.0" y1="1045.6" x2="1950.6" y2="1055.4" stroke="#e74e48" stroke-width="1.0"/><line x1="1950.6" y1="1055.4" x2="1938.3" y2="1064.0" stroke="#e4484b" stroke-width="1.0"/><line x1="1938.3" y1="1064.0" x2="1925.2" y2="1071.3" stroke="#e1424e" stroke-width="1.0"/><line x1="1925.2" y1="1071.3" x2="1911.4" y2="1077.2" stroke="#db3c50" stroke-width="1.0"/><line x1="1911.4" y1="1077.2" x2="1897.0" y2="1081.7" stroke="#d53850" stroke-width="1.0"/><line x1="1897.0" y1="1081.7" x2="1882.3" y2="1084.7" stroke="#cf3350" stroke-width="1.0"/><line x1="1882.3" y1="1084.7" x2="1867.4" y2="1086.2" stroke="#c92e50" stroke-width="1.0"/><line x1="1867.4" y1="1086.2" x2="1852.4" y2="1086.2" stroke="#c32a50" stroke-width="1.0"/><line x1="1852.4" y1="1086.2" x2="1837.5" y2="1084.7" stroke="#b6284e" stroke-width="1.0"/><line x1="1837.5" y1="1084.7" x2="1822.8" y2="1081.7" stroke="#a4284c" stroke-width="1.0"/><line x1="1822.8" y1="1081.7" x2="1808.4" y2="1077.2" stroke="#91284a" stroke-width="1.0"/><line x1="1808.4" y1="1077.2" x2="1794.6" y2="1071.3" stroke="#7f2847" stroke-width="1.0"/><line x1="1794.6" y1="1071.3" x2="1781.5" y2="1064.0" stroke="#702946" stroke-width="1.0"/><line x1="1781.5" y1="1064.0" x2="1769.2" y2="1055.4" stroke="#612b44" stroke-width="1.0"/><line x1="1769.2" y1="1055.4" x2="1757.8" y2="1045.6" stroke="#522d42" stroke-width="1.0"/><line x1="1757.8" y1="1045.6" x2="1747.5" y2="1034.7" stroke="#432f40" stroke-width="1.0"/><line x1="1747.5" y1="1034.7" x2="1738.3" y2="1022.9" stroke="#3a3441" stroke-width="1.0"/><line x1="1738.3" y1="1022.9" x2="1730.3" y2="1010.1" stroke="#323943" stroke-width="1.0"/><line x1="1730.3" y1="1010.1" x2="1723.7" y2="996.6" stroke="#2b3f45" stroke-width="1.0"/><line x1="1723.7" y1="996.6" x2="1718.5" y2="982.6" stroke="#244446" stroke-width="1.0"/><line x1="1718.5" y1="982.6" x2="1714.7" y2="968.0" stroke="#204d48" stroke-width="1.0"/><line x1="1714.7" y1="968.0" x2="1712.5" y2="953.2" stroke="#205848" stroke-width="1.0"/><line x1="1712.5" y1="953.2" x2="1711.7" y2="938.2" stroke="#206448" stroke-width="1.0"/><line x1="1711.7" y1="938.2" x2="1712.5" y2="923.2" stroke="#207048" stroke-width="1.0"/><line x1="1712.5" y1="923.2" x2="1714.7" y2="908.4" stroke="#227846" stroke-width="1.0"/><line x1="1714.7" y1="908.4" x2="1718.5" y2="893.8" stroke="#248045" stroke-width="1.0"/><line x1="1718.5" y1="893.8" x2="1723.7" y2="879.8" stroke="#268844" stroke-width="1.0"/><line x1="1723.7" y1="879.8" x2="1730.3" y2="866.3" stroke="#289143" stroke-width="1.0"/><line x1="1730.3" y1="866.3" x2="1738.3" y2="853.5" stroke="#2a9942" stroke-width="1.0"/><line x1="1738.3" y1="853.5" x2="1747.5" y2="841.7" stroke="#2ca141" stroke-width="1.0"/><line x1="1747.5" y1="841.7" x2="1757.8" y2="830.8" stroke="#2ea940" stroke-width="1.0"/><line x1="1757.8" y1="830.8" x2="1769.2" y2="821.0" stroke="#30b140" stroke-width="1.0"/><line x1="1769.2" y1="821.0" x2="1781.5" y2="812.4" stroke="#32b540" stroke-width="1.0"/><line x1="1781.5" y1="812.4" x2="1794.6" y2="805.1" stroke="#34b940" stroke-width="1.0"/><line x1="1794.6" y1="805.1" x2="1808.4" y2="799.2" stroke="#36bd40" stroke-width="1.0"/><line x1="1808.4" y1="799.2" x2="1822.8" y2="794.7" stroke="#38c140" stroke-width="1.0"/><line x1="1822.8" y1="794.7" x2="1837.5" y2="791.7" stroke="#3ac540" stroke-width="1.0"/><line x1="1837.5" y1="791.7" x2="1852.4" y2="790.2" stroke="#3cc940" stroke-width="1.0"/><line x1="1852.4" y1="790.2" x2="1867.4" y2="790.2" stroke="#3ecd40" stroke-width="1.0"/><line x1="1867.4" y1="790.2" x2="1882.3" y2="791.7" stroke="#49d040" stroke-width="1.0"/><line x1="1882.3" y1="791.7" x2="1897.0" y2="794.7" stroke="#5bd040" stroke-width="1.0"/><line x1="1897.0" y1="794.7" x2="1911.4" y2="799.2" stroke="#6ed040" stroke-width="1.0"/><line x1="1911.4" y1="799.2" x2="1925.2" y2="805.1" stroke="#81d040" stroke-width="1.0"/><line x1="1925.2" y1="805.1" x2="1938.3" y2="812.4" stroke="#93d040" stroke-width="1.0"/><line x1="1938.3" y1="812.4" x2="1950.6" y2="821.0" stroke="#a4ce40" stroke-width="1.0"/><line x1="1950.6" y1="821.0" x2="1962.0" y2="830.8" stroke="#b0cb40" stroke-width="1.0"/><line x1="1962.0" y1="830.8" x2="1972.3" y2="841.7" stroke="#bcc840" stroke-width="1.0"/><line x1="1972.3" y1="841.7" x2="1981.5" y2="853.5" stroke="#c9c540" stroke-width="1.0"/><line x1="1981.5" y1="853.5" x2="1989.5" y2="866.3" stroke="#d5c240" stroke-width="1.0"/><line x1="1989.5" y1="866.3" x2="1996.1" y2="879.8" stroke="#e0bd40" stroke-width="1.0"/><line x1="1996.1" y1="879.8" x2="2001.3" y2="893.8" stroke="#e3b140" stroke-width="1.0"/><line x1="2001.3" y1="893.8" x2="2005.1" y2="908.4" stroke="#e6a540" stroke-width="1.0"/><line x1="2005.1" y1="908.4" x2="2007.3" y2="923.2" stroke="#e99840" stroke-width="1.0"/><line x1="2007.3" y1="923.2" x2="2008.1" y2="938.2" stroke="#ec8c40" stroke-width="1.0"/><circle cx="2008.1" cy="938.2" r="3.3" fill="#f08040"/><circle cx="2007.3" cy="953.2" r="3.3" fill="#f07940"/><circle cx="2005.1" cy="968.0" r="3.3" fill="#f07340"/><circle cx="2001.3" cy="982.6" r="3.3" fill="#f06d40"/><circle cx="1996.1" cy="996.6" r="3.3" fill="#f06740"/><circle cx="1989.5" cy="1010.1" r="3.3" fill="#f06140"/><circle cx="1981.5" cy="1022.9" r="3.3" fill="#ed5a42"/><circle cx="1972.3" cy="1034.7" r="3.3" fill="#ea5445"/><circle cx="1962.0" cy="1045.6" r="3.3" fill="#e74e48"/><circle cx="1950.6" cy="1055.4" r="3.3" fill="#e4484b"/><circle cx="1938.3" cy="1064.0" r="3.3" fill="#e1424e"/><circle cx="1925.2" cy="1071.3" r="3.3" fill="#db3c50"/><circle cx="1911.4" cy="1077.2" r="3.3" fill="#d53850"/><circle cx="1897.0" cy="1081.7" r="3.3" fill="#cf3350"/><circle cx="1882.3" cy="1084.7" r="3.3" fill="#c92e50"/><circle cx="1867.4" cy="1086.2" r="3.3" fill="#c32a50"/><circle cx="1852.4" cy="1086.2" r="3.3" fill="#b6284e"/><circle cx="1837.5" cy="1084.7" r="3.3" fill="#a4284c"/><circle cx="1822.8" cy="1081.7" r="3.3" fill="#91284a"/><circle cx="1808.4" cy="1077.2" r="3.3" fill="#7f2847"/><circle cx="1794.6" cy="1071.3" r="3.3" fill="#702946"/><circle cx="1781.5" cy="1064.0" r="3.3" fill="#612b44"/><circle cx="1769.2" cy="1055.4" r="3.3" fill="#522d42"/><circle cx="1757.8" cy="1045.6" r="3.3" fill="#432f40"/><circle cx="1747.5" cy="1034.7" r="3.3" fill="#3a3441"/><circle cx="1738.3" cy="1022.9" r="3.3" fill="#323943"/><circle cx="1730.3" cy="1010.1" r="3.3" fill="#2b3f45"/><circle cx="1723.7" cy="996.6" r="3.3" fill="#244446"/><circle cx="1718.5" cy="982.6" r="3.3" fill="#204d48"/><circle cx="1714.7" cy="968.0" r="3.3" fill="#205848"/><circle cx="1712.5" cy="953.2" r="3.3" fill="#206448"/><circle cx="1711.7" cy="938.2" r="3.3" fill="#207048"/><circle cx="1712.5" cy="923.2" r="3.3" fill="#227846"/><circle cx="1714.7" cy="908.4" r="3.3" fill="#248045"/><circle cx="1718.5" cy="893.8" r="3.3" fill="#268844"/><circle cx="1723.7" cy="879.8" r="3.3" fill="#289143"/><circle cx="1730.3" cy="866.3" r="3.3" fill="#2a9942"/><circle cx="1738.3" cy="853.5" r="3.3" fill="#2ca141"/><circle cx="1747.5" cy="841.7" r="3.3" fill="#2ea940"/><circle cx="1757.8" cy="830.8" r="3.3" fill="#30b140"/><circle cx="1769.2" cy="821.0" r="3.3" fill="#32b540"/><circle cx="1781.5" cy="812.4" r="3.3" fill="#34b940"/><circle cx="1794.6" cy="805.1" r="3.3" fill="#36bd40"/><circle cx="1808.4" cy="799.2" r="3.3" fill="#38c140"/><circle cx="1822.8" cy="794.7" r="3.3" fill="#3ac540"/><circle cx="1837.5" cy="791.7" r="3.3" fill="#3cc940"/><circle cx="1852.4" cy="790.2" r="3.3" fill="#3ecd40"/><circle cx="1867.4" cy="790.2" r="3.3" fill="#49d040"/><circle cx="1882.3" cy="791.7" r="3.3" fill="#5bd040"/><circle cx="1897.0" cy="794.7" r="3.3" fill="#6ed040"/><circle cx="1911.4" cy="799.2" r="3.3" fill="#81d040"/><circle cx="1925.2" cy="805.1" r="3.3" fill="#93d040"/><circle cx="1938.3" cy="812.4" r="3.3" fill="#a4ce40"/><circle cx="1950.6" cy="821.0" r="3.3" fill="#b0cb40"/><circle cx="1962.0" cy="830.8" r="3.3" fill="#bcc840"/><circle cx="1972.3" cy="841.7" r="3.3" fill="#c9c540"/><circle cx="1981.5" cy="853.5" r="3.3" fill="#d5c240"/><circle cx="1989.5" cy="866.3" r="3.3" fill="#e0bd40"/><circle cx="1996.1" cy="879.8" r="3.3" fill="#e3b140"/><circle cx="2001.3" cy="893.8" r="3.3" fill="#e6a540"/><circle cx="2005.1" cy="908.4" r="3.3" fill="#e99840"/><circle cx="2007.3" cy="923.2" r="3.3" fill="#ec8c40"/><line x1="1948.2" y1="917.0" x2="1947.7" y2="927.3" stroke="#a078f0" stroke-width="1.0"/><line x1="1947.7" y1="927.3" x2="1946.1" y2="937.5" stroke="#9d74f0" stroke-width="1.0"/><line x1="1946.1" y1="937.5" x2="1943.5" y2="947.4" stroke="#9b71f0" stroke-width="1.0"/><line x1="1943.5" y1="947.4" x2="1940.0" y2="957.1" stroke="#996ef0" stroke-width="1.0"/><line x1="1940.0" y1="957.1" x2="1935.4" y2="966.4" stroke="#976bf0" stroke-width="1.0"/><line x1="1935.4" y1="966.4" x2="1930.0" y2="975.1" stroke="#9568f0" stroke-width="1.0"/><line x1="1930.0" y1="975.1" x2="1923.7" y2="983.2" stroke="#9365f0" stroke-width="1.0"/><line x1="1923.7" y1="983.2" x2="1916.6" y2="990.7" stroke="#9162f0" stroke-width="1.0"/><line x1="1916.6" y1="990.7" x2="1908.8" y2="997.4" stroke="#8f5ff0" stroke-width="1.0"/><line x1="1908.8" y1="997.4" x2="1900.3" y2="1003.3" stroke="#8c5df0" stroke-width="1.0"/><line x1="1900.3" y1="1003.3" x2="1891.3" y2="1008.3" stroke="#895bf0" stroke-width="1.0"/><line x1="1891.3" y1="1008.3" x2="1881.8" y2="1012.4" stroke="#8659f0" stroke-width="1.0"/><line x1="1881.8" y1="1012.4" x2="1872.0" y2="1015.5" stroke="#8357f0" stroke-width="1.0"/><line x1="1872.0" y1="1015.5" x2="1861.9" y2="1017.5" stroke="#8155f0" stroke-width="1.0"/><line x1="1861.9" y1="1017.5" x2="1851.7" y2="1018.6" stroke="#7e53f0" stroke-width="1.0"/><line x1="1851.7" y1="1018.6" x2="1841.3" y2="1018.6" stroke="#7b51f0" stroke-width="1.0"/><line x1="1841.3" y1="1018.6" x2="1831.1" y2="1017.5" stroke="#7851f0" stroke-width="1.0"/><line x1="1831.1" y1="1017.5" x2="1821.0" y2="1015.5" stroke="#7453f0" stroke-width="1.0"/><line x1="1821.0" y1="1015.5" x2="1811.2" y2="1012.4" stroke="#7155f0" stroke-width="1.0"/><line x1="1811.2" y1="1012.4" x2="1801.7" y2="1008.3" stroke="#6e57f0" stroke-width="1.0"/><line x1="1801.7" y1="1008.3" x2="1792.7" y2="1003.3" stroke="#6a59f0" stroke-width="1.0"/><line x1="1792.7" y1="1003.3" x2="1784.2" y2="997.4" stroke="#675bf0" stroke-width="1.0"/><line x1="1784.2" y1="997.4" x2="1776.4" y2="990.7" stroke="#645df0" stroke-width="1.0"/><line x1="1776.4" y1="990.7" x2="1769.3" y2="983.2" stroke="#605ff0" stroke-width="1.0"/><line x1="1769.3" y1="983.2" x2="1763.0" y2="975.1" stroke="#5d62f0" stroke-width="1.0"/><line x1="1763.0" y1="975.1" x2="1757.6" y2="966.4" stroke="#5a65f0" stroke-width="1.0"/><line x1="1757.6" y1="966.4" x2="1753.0" y2="957.1" stroke="#5768f0" stroke-width="1.0"/><line x1="1753.0" y1="957.1" x2="1749.5" y2="947.4" stroke="#546bf0" stroke-width="1.0"/><line x1="1749.5" y1="947.4" x2="1746.9" y2="937.5" stroke="#516ef0" stroke-width="1.0"/><line x1="1746.9" y1="937.5" x2="1745.3" y2="927.3" stroke="#4e71f0" stroke-width="1.0"/><line x1="1745.3" y1="927.3" x2="1744.8" y2="917.0" stroke="#4b74f0" stroke-width="1.0"/><line x1="1744.8" y1="917.0" x2="1745.3" y2="906.7" stroke="#4878f0" stroke-width="1.0"/><line x1="1745.3" y1="906.7" x2="1746.9" y2="896.5" stroke="#4a7bf1" stroke-width="1.0"/><line x1="1746.9" y1="896.5" x2="1749.5" y2="886.6" stroke="#4d7ef2" stroke-width="1.0"/><line x1="1749.5" y1="886.6" x2="1753.0" y2="876.9" stroke="#4f81f3" stroke-width="1.0"/><line x1="1753.0" y1="876.9" x2="1757.6" y2="867.6" stroke="#5284f4" stroke-width="1.0"/><line x1="1757.6" y1="867.6" x2="1763.0" y2="858.9" stroke="#5487f5" stroke-width="1.0"/><line x1="1763.0" y1="858.9" x2="1769.3" y2="850.8" stroke="#578af6" stroke-width="1.0"/><line x1="1769.3" y1="850.8" x2="1776.4" y2="843.3" stroke="#5a8df7" stroke-width="1.0"/><line x1="1776.4" y1="843.3" x2="1784.2" y2="836.6" stroke="#5d91f8" stroke-width="1.0"/><line x1="1784.2" y1="836.6" x2="1792.7" y2="830.7" stroke="#6195f9" stroke-width="1.0"/><line x1="1792.7" y1="830.7" x2="1801.7" y2="825.7" stroke="#6699fa" stroke-width="1.0"/><line x1="1801.7" y1="825.7" x2="1811.2" y2="821.6" stroke="#6b9dfa" stroke-width="1.0"/><line x1="1811.2" y1="821.6" x2="1821.0" y2="818.5" stroke="#6fa1fb" stroke-width="1.0"/><line x1="1821.0" y1="818.5" x2="1831.1" y2="816.5" stroke="#74a5fc" stroke-width="1.0"/><line x1="1831.1" y1="816.5" x2="1841.3" y2="815.4" stroke="#79a9fd" stroke-width="1.0"/><line x1="1841.3" y1="815.4" x2="1851.7" y2="815.4" stroke="#7dadfe" stroke-width="1.0"/><line x1="1851.7" y1="815.4" x2="1861.9" y2="816.5" stroke="#83b0fe" stroke-width="1.0"/><line x1="1861.9" y1="816.5" x2="1872.0" y2="818.5" stroke="#89b0fc" stroke-width="1.0"/><line x1="1872.0" y1="818.5" x2="1881.8" y2="821.6" stroke="#8fb0fa" stroke-width="1.0"/><line x1="1881.8" y1="821.6" x2="1891.3" y2="825.7" stroke="#95b0f8" stroke-width="1.0"/><line x1="1891.3" y1="825.7" x2="1900.3" y2="830.7" stroke="#9bb0f6" stroke-width="1.0"/><line x1="1900.3" y1="830.7" x2="1908.8" y2="836.6" stroke="#a2b0f4" stroke-width="1.0"/><line x1="1908.8" y1="836.6" x2="1916.6" y2="843.3" stroke="#a8b0f2" stroke-width="1.0"/><line x1="1916.6" y1="843.3" x2="1923.7" y2="850.8" stroke="#aeb0f0" stroke-width="1.0"/><line x1="1923.7" y1="850.8" x2="1930.0" y2="858.9" stroke="#aeaaf0" stroke-width="1.0"/><line x1="1930.0" y1="858.9" x2="1935.4" y2="867.6" stroke="#aca3f0" stroke-width="1.0"/><line x1="1935.4" y1="867.6" x2="1940.0" y2="876.9" stroke="#aa9cf0" stroke-width="1.0"/><line x1="1940.0" y1="876.9" x2="1943.5" y2="886.6" stroke="#a894f0" stroke-width="1.0"/><line x1="1943.5" y1="886.6" x2="1946.1" y2="896.5" stroke="#a68df0" stroke-width="1.0"/><line x1="1946.1" y1="896.5" x2="1947.7" y2="906.7" stroke="#a486f0" stroke-width="1.0"/><line x1="1947.7" y1="906.7" x2="1948.2" y2="917.0" stroke="#a27ff0" stroke-width="1.0"/><circle cx="1948.2" cy="917.0" r="3.3" fill="#a078f0"/><circle cx="1947.7" cy="927.3" r="3.3" fill="#9d74f0"/><circle cx="1946.1" cy="937.5" r="3.3" fill="#9b71f0"/><circle cx="1943.5" cy="947.4" r="3.3" fill="#996ef0"/><circle cx="1940.0" cy="957.1" r="3.3" fill="#976bf0"/><circle cx="1935.4" cy="966.4" r="3.3" fill="#9568f0"/><circle cx="1930.0" cy="975.1" r="3.3" fill="#9365f0"/><circle cx="1923.7" cy="983.2" r="3.3" fill="#9162f0"/><circle cx="1916.6" cy="990.7" r="3.3" fill="#8f5ff0"/><circle cx="1908.8" cy="997.4" r="3.3" fill="#8c5df0"/><circle cx="1900.3" cy="1003.3" r="3.3" fill="#895bf0"/><circle cx="1891.3" cy="1008.3" r="3.3" fill="#8659f0"/><circle cx="1881.8" cy="1012.4" r="3.3" fill="#8357f0"/><circle cx="1872.0" cy="1015.5" r="3.3" fill="#8155f0"/><circle cx="1861.9" cy="1017.5" r="3.3" fill="#7e53f0"/><circle cx="1851.7" cy="1018.6" r="3.3" fill="#7b51f0"/><circle cx="1841.3" cy="1018.6" r="3.3" fill="#7851f0"/><circle cx="1831.1" cy="1017.5" r="3.3" fill="#7453f0"/><circle cx="1821.0" cy="1015.5" r="3.3" fill="#7155f0"/><circle cx="1811.2" cy="1012.4" r="3.3" fill="#6e57f0"/><circle cx="1801.7" cy="1008.3" r="3.3" fill="#6a59f0"/><circle cx="1792.7" cy="1003.3" r="3.3" fill="#675bf0"/><circle cx="1784.2" cy="997.4" r="3.3" fill="#645df0"/><circle cx="1776.4" cy="990.7" r="3.3" fill="#605ff0"/><circle cx="1769.3" cy="983.2" r="3.3" fill="#5d62f0"/><circle cx="1763.0" cy="975.1" r="3.3" fill="#5a65f0"/><circle cx="1757.6" cy="966.4" r="3.3" fill="#5768f0"/><circle cx="1753.0" cy="957.1" r="3.3" fill="#546bf0"/><circle cx="1749.5" cy="947.4" r="3.3" fill="#516ef0"/><circle cx="1746.9" cy="937.5" r="3.3" fill="#4e71f0"/><circle cx="1745.3" cy="927.3" r="3.3" fill="#4b74f0"/><circle cx="1744.8" cy="917.0" r="3.3" fill="#4878f0"/><circle cx="1745.3" cy="906.7" r="3.3" fill="#4a7bf1"/><circle cx="1746.9" cy="896.5" r="3.3" fill="#4d7ef2"/><circle cx="1749.5" cy="886.6" r="3.3" fill="#4f81f3"/><circle cx="1753.0" cy="876.9" r="3.3" fill="#5284f4"/><circle cx="1757.6" cy="867.6" r="3.3" fill="#5487f5"/><circle cx="1763.0" cy="858.9" r="3.3" fill="#578af6"/><circle cx="1769.3" cy="850.8" r="3.3" fill="#5a8df7"/><circle cx="1776.4" cy="843.3" r="3.3" fill="#5d91f8"/><circle cx="1784.2" cy="836.6" r="3.3" fill="#6195f9"/><circle cx="1792.7" cy="830.7" r="3.3" fill="#6699fa"/><circle cx="1801.7" cy="825.7" r="3.3" fill="#6b9dfa"/><circle cx="1811.2" cy="821.6" r="3.3" fill="#6fa1fb"/><circle cx="1821.0" cy="818.5" r="3.3" fill="#74a5fc"/><circle cx="1831.1" cy="816.5" r="3.3" fill="#79a9fd"/><circle cx="1841.3" cy="815.4" r="3.3" fill="#7dadfe"/><circle cx="1851.7" cy="815.4" r="3.3" fill="#83b0fe"/><circle cx="1861.9" cy="816.5" r="3.3" fill="#89b0fc"/><circle cx="1872.0" cy="818.5" r="3.3" fill="#8fb0fa"/><circle cx="1881.8" cy="821.6" r="3.3" fill="#95b0f8"/><circle cx="1891.3" cy="825.7" r="3.3" fill="#9bb0f6"/><circle cx="1900.3" cy="830.7" r="3.3" fill="#a2b0f4"/><circle cx="1908.8" cy="836.6" r="3.3" fill="#a8b0f2"/><circle cx="1916.6" cy="843.3" r="3.3" fill="#aeb0f0"/><circle cx="1923.7" cy="850.8" r="3.3" fill="#aeaaf0"/><circle cx="1930.0" cy="858.9" r="3.3" fill="#aca3f0"/><circle cx="1935.4" cy="867.6" r="3.3" fill="#aa9cf0"/><circle cx="1940.0" cy="876.9" r="3.3" fill="#a894f0"/><circle cx="1943.5" cy="886.6" r="3.3" fill="#a68df0"/><circle cx="1946.1" cy="896.5" r="3.3" fill="#a486f0"/><circle cx="1947.7" cy="906.7" r="3.3" fill="#a27ff0"/><line x1="1962.5" y1="939.2" x2="1962.0" y2="949.5" stroke="#e89030" stroke-width="1.0"/><line x1="1962.0" y1="949.5" x2="1960.4" y2="959.7" stroke="#e58a30" stroke-width="1.0"/><line x1="1960.4" y1="959.7" x2="1957.8" y2="969.7" stroke="#e38530" stroke-width="1.0"/><line x1="1957.8" y1="969.7" x2="1954.2" y2="979.4" stroke="#e18030" stroke-width="1.0"/><line x1="1954.2" y1="979.4" x2="1949.7" y2="988.7" stroke="#df7b30" stroke-width="1.0"/><line x1="1949.7" y1="988.7" x2="1944.2" y2="997.5" stroke="#dd7630" stroke-width="1.0"/><line x1="1944.2" y1="997.5" x2="1937.9" y2="1005.6" stroke="#db7130" stroke-width="1.0"/><line x1="1937.9" y1="1005.6" x2="1930.8" y2="1013.1" stroke="#d96b30" stroke-width="1.0"/><line x1="1930.8" y1="1013.1" x2="1922.9" y2="1019.9" stroke="#d6672f" stroke-width="1.0"/><line x1="1922.9" y1="1019.9" x2="1914.5" y2="1025.8" stroke="#d1632e" stroke-width="1.0"/><line x1="1914.5" y1="1025.8" x2="1905.4" y2="1030.8" stroke="#cc5f2d" stroke-width="1.0"/><line x1="1905.4" y1="1030.8" x2="1895.9" y2="1034.9" stroke="#c75c2c" stroke-width="1.0"/><line x1="1895.9" y1="1034.9" x2="1886.1" y2="1037.9" stroke="#c2582b" stroke-width="1.0"/><line x1="1886.1" y1="1037.9" x2="1875.9" y2="1040.0" stroke="#bc552a" stroke-width="1.0"/><line x1="1875.9" y1="1040.0" x2="1865.7" y2="1041.1" stroke="#b75129" stroke-width="1.0"/><line x1="1865.7" y1="1041.1" x2="1855.3" y2="1041.1" stroke="#b24d28" stroke-width="1.0"/><line x1="1855.3" y1="1041.1" x2="1845.1" y2="1040.0" stroke="#ac4b28" stroke-width="1.0"/><line x1="1845.1" y1="1040.0" x2="1834.9" y2="1037.9" stroke="#a44b28" stroke-width="1.0"/><line x1="1834.9" y1="1037.9" x2="1825.1" y2="1034.9" stroke="#9d4b28" stroke-width="1.0"/><line x1="1825.1" y1="1034.9" x2="1815.6" y2="1030.8" stroke="#964a28" stroke-width="1.0"/><line x1="1815.6" y1="1030.8" x2="1806.5" y2="1025.8" stroke="#8e4a28" stroke-width="1.0"/><line x1="1806.5" y1="1025.8" x2="1798.1" y2="1019.9" stroke="#864a27" stroke-width="1.0"/><line x1="1798.1" y1="1019.9" x2="1790.2" y2="1013.1" stroke="#7b4b25" stroke-width="1.0"/><line x1="1790.2" y1="1013.1" x2="1783.1" y2="1005.6" stroke="#6f4c24" stroke-width="1.0"/><line x1="1783.1" y1="1005.6" x2="1776.8" y2="997.5" stroke="#644d22" stroke-width="1.0"/><line x1="1776.8" y1="997.5" x2="1771.3" y2="988.7" stroke="#594f21" stroke-width="1.0"/><line x1="1771.3" y1="988.7" x2="1766.8" y2="979.4" stroke="#4f5220" stroke-width="1.0"/><line x1="1766.8" y1="979.4" x2="1763.2" y2="969.7" stroke="#4c6220" stroke-width="1.0"/><line x1="1763.2" y1="969.7" x2="1760.6" y2="959.7" stroke="#497120" stroke-width="1.0"/><line x1="1760.6" y1="959.7" x2="1759.0" y2="949.5" stroke="#468120" stroke-width="1.0"/><line x1="1759.0" y1="949.5" x2="1758.5" y2="939.2" stroke="#439020" stroke-width="1.0"/><line x1="1758.5" y1="939.2" x2="1759.0" y2="928.9" stroke="#40a020" stroke-width="1.0"/><line x1="1759.0" y1="928.9" x2="1760.6" y2="918.7" stroke="#42a422" stroke-width="1.0"/><line x1="1760.6" y1="918.7" x2="1763.2" y2="908.7" stroke="#44a824" stroke-width="1.0"/><line x1="1763.2" y1="908.7" x2="1766.8" y2="899.0" stroke="#46ac26" stroke-width="1.0"/><line x1="1766.8" y1="899.0" x2="1771.3" y2="889.7" stroke="#48b028" stroke-width="1.0"/><line x1="1771.3" y1="889.7" x2="1776.8" y2="880.9" stroke="#4ab42a" stroke-width="1.0"/><line x1="1776.8" y1="880.9" x2="1783.1" y2="872.8" stroke="#4cb82c" stroke-width="1.0"/><line x1="1783.1" y1="872.8" x2="1790.2" y2="865.3" stroke="#4ebc2e" stroke-width="1.0"/><line x1="1790.2" y1="865.3" x2="1798.1" y2="858.5" stroke="#51c030" stroke-width="1.0"/><line x1="1798.1" y1="858.5" x2="1806.5" y2="852.6" stroke="#59c230" stroke-width="1.0"/><line x1="1806.5" y1="852.6" x2="1815.6" y2="847.6" stroke="#60c430" stroke-width="1.0"/><line x1="1815.6" y1="847.6" x2="1825.1" y2="843.5" stroke="#67c630" stroke-width="1.0"/><line x1="1825.1" y1="843.5" x2="1834.9" y2="840.5" stroke="#6ec830" stroke-width="1.0"/><line x1="1834.9" y1="840.5" x2="1845.1" y2="838.4" stroke="#75ca30" stroke-width="1.0"/><line x1="1845.1" y1="838.4" x2="1855.3" y2="837.3" stroke="#7dcc30" stroke-width="1.0"/><line x1="1855.3" y1="837.3" x2="1865.7" y2="837.3" stroke="#84ce30" stroke-width="1.0"/><line x1="1865.7" y1="837.3" x2="1875.9" y2="838.4" stroke="#8cce30" stroke-width="1.0"/><line x1="1875.9" y1="838.4" x2="1886.1" y2="840.5" stroke="#95cc30" stroke-width="1.0"/><line x1="1886.1" y1="840.5" x2="1895.9" y2="843.5" stroke="#9fca30" stroke-width="1.0"/><line x1="1895.9" y1="843.5" x2="1905.4" y2="847.6" stroke="#a8c830" stroke-width="1.0"/><line x1="1905.4" y1="847.6" x2="1914.5" y2="852.6" stroke="#b1c630" stroke-width="1.0"/><line x1="1914.5" y1="852.6" x2="1922.9" y2="858.5" stroke="#bbc430" stroke-width="1.0"/><line x1="1922.9" y1="858.5" x2="1930.8" y2="865.3" stroke="#c4c230" stroke-width="1.0"/><line x1="1930.8" y1="865.3" x2="1937.9" y2="872.8" stroke="#cdc030" stroke-width="1.0"/><line x1="1937.9" y1="872.8" x2="1944.2" y2="880.9" stroke="#d2bb30" stroke-width="1.0"/><line x1="1944.2" y1="880.9" x2="1949.7" y2="889.7" stroke="#d5b530" stroke-width="1.0"/><line x1="1949.7" y1="889.7" x2="1954.2" y2="899.0" stroke="#d8ae30" stroke-width="1.0"/><line x1="1954.2" y1="899.0" x2="1957.8" y2="908.7" stroke="#dba830" stroke-width="1.0"/><line x1="1957.8" y1="908.7" x2="1960.4" y2="918.7" stroke="#dea230" stroke-width="1.0"/><line x1="1960.4" y1="918.7" x2="1962.0" y2="928.9" stroke="#e19c30" stroke-width="1.0"/><line x1="1962.0" y1="928.9" x2="1962.5" y2="939.2" stroke="#e49630" stroke-width="1.0"/><circle cx="1962.5" cy="939.2" r="3.3" fill="#e89030"/><circle cx="1962.0" cy="949.5" r="3.3" fill="#e58a30"/><circle cx="1960.4" cy="959.7" r="3.3" fill="#e38530"/><circle cx="1957.8" cy="969.7" r="3.3" fill="#e18030"/><circle cx="1954.2" cy="979.4" r="3.3" fill="#df7b30"/><circle cx="1949.7" cy="988.7" r="3.3" fill="#dd7630"/><circle cx="1944.2" cy="997.5" r="3.3" fill="#db7130"/><circle cx="1937.9" cy="1005.6" r="3.3" fill="#d96b30"/><circle cx="1930.8" cy="1013.1" r="3.3" fill="#d6672f"/><circle cx="1922.9" cy="1019.9" r="3.3" fill="#d1632e"/><circle cx="1914.5" cy="1025.8" r="3.3" fill="#cc5f2d"/><circle cx="1905.4" cy="1030.8" r="3.3" fill="#c75c2c"/><circle cx="1895.9" cy="1034.9" r="3.3" fill="#c2582b"/><circle cx="1886.1" cy="1037.9" r="3.3" fill="#bc552a"/><circle cx="1875.9" cy="1040.0" r="3.3" fill="#b75129"/><circle cx="1865.7" cy="1041.1" r="3.3" fill="#b24d28"/><circle cx="1855.3" cy="1041.1" r="3.3" fill="#ac4b28"/><circle cx="1845.1" cy="1040.0" r="3.3" fill="#a44b28"/><circle cx="1834.9" cy="1037.9" r="3.3" fill="#9d4b28"/><circle cx="1825.1" cy="1034.9" r="3.3" fill="#964a28"/><circle cx="1815.6" cy="1030.8" r="3.3" fill="#8e4a28"/><circle cx="1806.5" cy="1025.8" r="3.3" fill="#864a27"/><circle cx="1798.1" cy="1019.9" r="3.3" fill="#7b4b25"/><circle cx="1790.2" cy="1013.1" r="3.3" fill="#6f4c24"/><circle cx="1783.1" cy="1005.6" r="3.3" fill="#644d22"/><circle cx="1776.8" cy="997.5" r="3.3" fill="#594f21"/><circle cx="1771.3" cy="988.7" r="3.3" fill="#4f5220"/><circle cx="1766.8" cy="979.4" r="3.3" fill="#4c6220"/><circle cx="1763.2" cy="969.7" r="3.3" fill="#497120"/><circle cx="1760.6" cy="959.7" r="3.3" fill="#468120"/><circle cx="1759.0" cy="949.5" r="3.3" fill="#439020"/><circle cx="1758.5" cy="939.2" r="3.3" fill="#40a020"/><circle cx="1759.0" cy="928.9" r="3.3" fill="#42a422"/><circle cx="1760.6" cy="918.7" r="3.3" fill="#44a824"/><circle cx="1763.2" cy="908.7" r="3.3" fill="#46ac26"/><circle cx="1766.8" cy="899.0" r="3.3" fill="#48b028"/><circle cx="1771.3" cy="889.7" r="3.3" fill="#4ab42a"/><circle cx="1776.8" cy="880.9" r="3.3" fill="#4cb82c"/><circle cx="1783.1" cy="872.8" r="3.3" fill="#4ebc2e"/><circle cx="1790.2" cy="865.3" r="3.3" fill="#51c030"/><circle cx="1798.1" cy="858.5" r="3.3" fill="#59c230"/><circle cx="1806.5" cy="852.6" r="3.3" fill="#60c430"/><circle cx="1815.6" cy="847.6" r="3.3" fill="#67c630"/><circle cx="1825.1" cy="843.5" r="3.3" fill="#6ec830"/><circle cx="1834.9" cy="840.5" r="3.3" fill="#75ca30"/><circle cx="1845.1" cy="838.4" r="3.3" fill="#7dcc30"/><circle cx="1855.3" cy="837.3" r="3.3" fill="#84ce30"/><circle cx="1865.7" cy="837.3" r="3.3" fill="#8cce30"/><circle cx="1875.9" cy="838.4" r="3.3" fill="#95cc30"/><circle cx="1886.1" cy="840.5" r="3.3" fill="#9fca30"/><circle cx="1895.9" cy="843.5" r="3.3" fill="#a8c830"/><circle cx="1905.4" cy="847.6" r="3.3" fill="#b1c630"/><circle cx="1914.5" cy="852.6" r="3.3" fill="#bbc430"/><circle cx="1922.9" cy="858.5" r="3.3" fill="#c4c230"/><circle cx="1930.8" cy="865.3" r="3.3" fill="#cdc030"/><circle cx="1937.9" cy="872.8" r="3.3" fill="#d2bb30"/><circle cx="1944.2" cy="880.9" r="3.3" fill="#d5b530"/><circle cx="1949.7" cy="889.7" r="3.3" fill="#d8ae30"/><circle cx="1954.2" cy="899.0" r="3.3" fill="#dba830"/><circle cx="1957.8" cy="908.7" r="3.3" fill="#dea230"/><circle cx="1960.4" cy="918.7" r="3.3" fill="#e19c30"/><circle cx="1962.0" cy="928.9" r="3.3" fill="#e49630"/><defs><linearGradient id="rg" x1="0" y1="0" x2="1" y2="1"><stop offset="0" stop-color="#70a000"/><stop offset="0.5" stop-color="#a09000"/><stop offset="1" stop-color="#c07800"/></linearGradient><linearGradient id="sp" x1="0" y1="0" x2="1" y2="0"><stop offset="0" stop-color="#5050c0"/><stop offset="0.25" stop-color="#9088ff"/><stop offset="0.6" stop-color="#c080f0"/><stop offset="1" stop-color="#e880c8"/></linearGradient></defs><circle cx="1859.5" cy="939.3" r="52" stroke="url(#rg)" stroke-width="7" fill="none"/><polygon points="1848,914.5 1900,909.5 1946,905 1950,900 1953,912 2000,907 2022,899 2026,896 2030,910 2062,902 2070,897 2072,925 2068,930 2030,937 2024,937 2022,922 1990,920 1952,926 1948,926 1946,917 1900,916 1848,916" fill="url(#sp)"/></g><circle cx="1559" cy="676" r="10.5" fill="#d4d4d4" stroke="#b4b4b4" stroke-width="1"/><circle cx="1595" cy="676" r="10.5" fill="#d4d4d4" stroke="#b4b4b4" stroke-width="1"/><circle cx="1631" cy="676" r="10.5" fill="#35c94b" stroke="#2aa83e" stroke-width="1"/></svg>
</div></body></html>
